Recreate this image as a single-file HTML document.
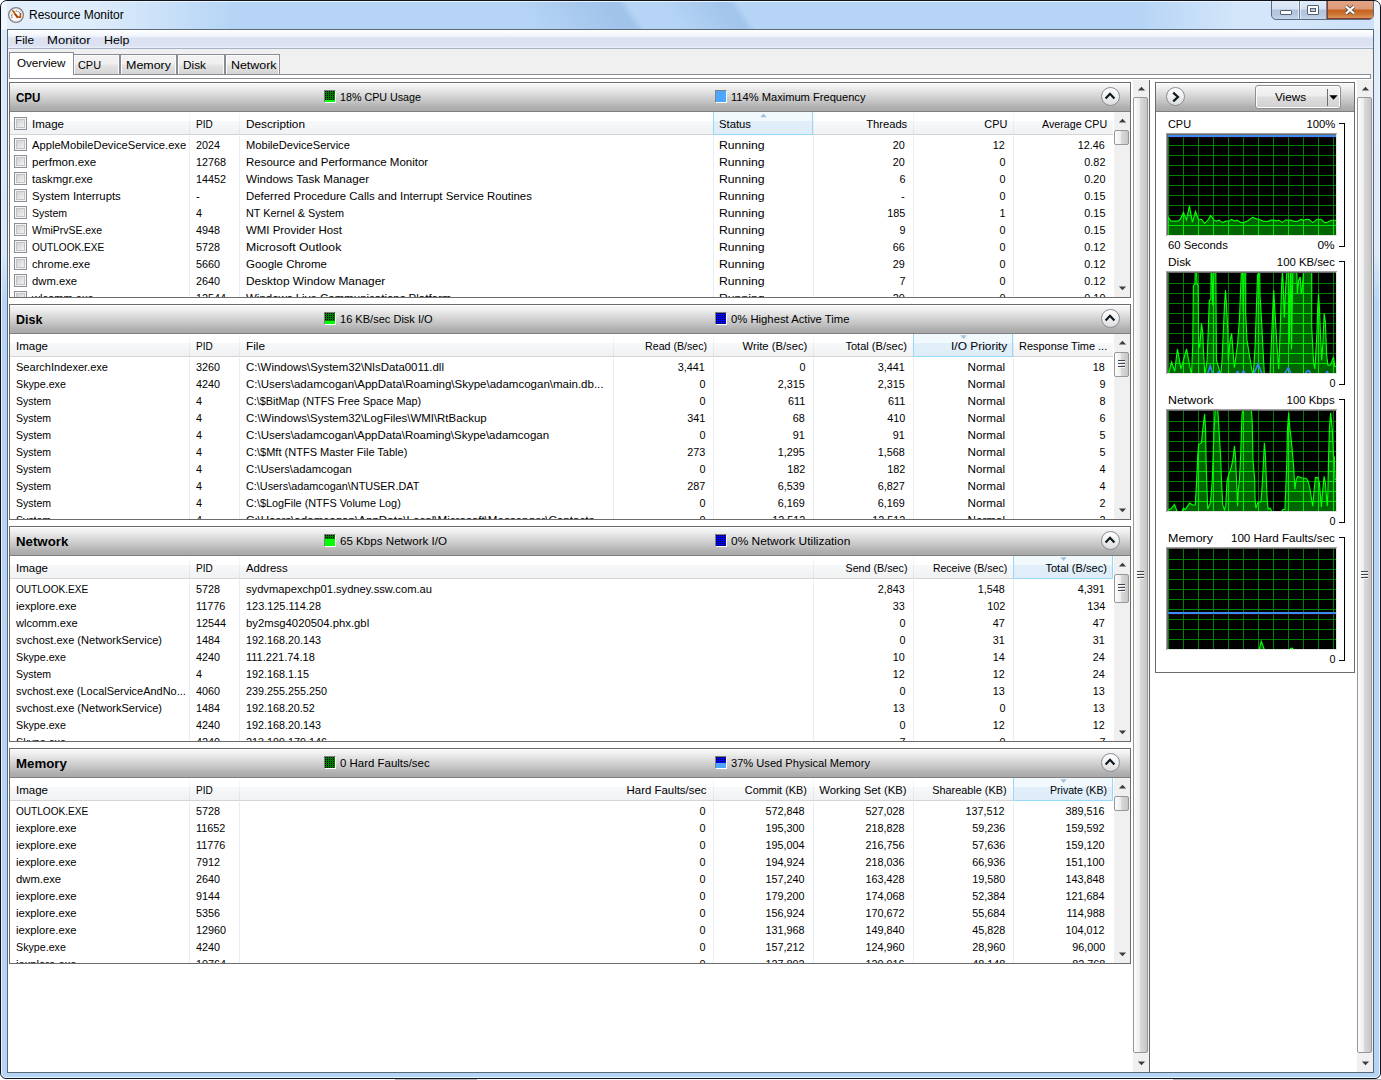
<!DOCTYPE html><html><head><meta charset="utf-8"><title>Resource Monitor</title><style>
*{box-sizing:border-box}
html,body{margin:0;padding:0}
body{width:1381px;height:1080px;position:relative;overflow:hidden;background:#fff;font-family:"Liberation Sans",sans-serif;font-size:12px;color:#000}
div{position:absolute}
.tx{white-space:nowrap;font-size:11.5px}
.tx span{display:inline-block;white-space:nowrap}
#win{left:0;top:0;width:1381px;height:1079px;border:1px solid #10131c;border-radius:7px 7px 6px 6px;overflow:hidden;
 background:#b9d7f7}
#glass{left:0;top:0;width:1379px;height:1077px;border:1px solid #eaf4fd;border-radius:6px 6px 5px 5px;background:#b6d5f6}
#lstrip{left:1px;top:1px;width:5px;height:330px;background:linear-gradient(rgba(255,255,255,.5) 0,rgba(255,255,255,.45) 250px,rgba(255,255,255,0) 300px)}
#rstrip{left:1373px;top:1px;width:5px;height:330px;background:linear-gradient(rgba(255,255,255,.6) 0,rgba(255,255,255,.5) 250px,rgba(255,255,255,0) 300px)}
#stripes{left:1px;top:1px;width:1377px;height:28px;background:linear-gradient(90deg,rgba(255,255,255,.62) 0,rgba(255,255,255,.55) 90px,rgba(255,255,255,0) 230px),linear-gradient(90deg,rgba(255,255,255,0) 1140px,rgba(255,255,255,.4) 1235px,rgba(255,255,255,.42) 1285px,rgba(255,255,255,.3) 1377px),linear-gradient(56deg,rgba(140,178,222,0) 440px,rgba(140,178,222,.5) 515px,rgba(140,178,222,.5) 526px,rgba(140,178,222,0) 534px,rgba(140,178,222,0) 560px,rgba(140,178,222,.45) 610px,rgba(140,178,222,.45) 618px,rgba(140,178,222,0) 626px)}
#client{left:6px;top:28px;width:1367px;height:1044px;border:1px solid #5a6878;background:#fff;overflow:hidden}
/* inside client coordinates are offset by (8,30) */
#c{left:-8px;top:-30px;width:1381px;height:1080px}
#menubar{left:8px;top:30px;width:1365px;height:19px;border-bottom:1px solid #a7b3c4;
 background:linear-gradient(#ffffff 0,#f3f6fc 5px,#e9eef9 7px,#dde2f2 8px,#dde2f2 16px,#e6ecf8 17px,#e9eff9 18px)}
#tabbg{left:8px;top:49px;width:1365px;height:30px;background:#f0f0f0}
.tab{top:54px;height:20px;border:1px solid #898c95;border-bottom:none;background:linear-gradient(#f2f2f2 0,#f0f0f0 9px,#e4e4e4 10px,#d4d4d4 19px);box-shadow:inset 1px 1px 0 #fbfbfb,inset -1px 0 0 #fbfbfb}
#tabpane{left:9px;top:74px;width:1362px;height:5px;border:1px solid #898c95;background:#fff}
#tab0{left:9px;top:52px;width:65px;height:23px;border:1px solid #898c95;border-bottom:none;background:#fff}
.sec{left:9px;width:1122px;height:216px;border:1px solid #6c6c6c;background:#fff;overflow:hidden}
.shead{left:0;top:0;width:1120px;height:29px;border-bottom:1px solid #7f7f7f;
 background:linear-gradient(#ffffff 0,#ffffff 1px,#f6f7f9 1px,#eeeeee 5px,#e1e1e1 9px,#d2d2d2 14px,#c2c2c2 19px,#b0b0b0 24px,#a8a8a8 28px)}
.stitle{font-weight:bold;font-size:13px}
.chead{left:0;top:29px;width:1103px;height:23px;border-bottom:1px solid #d5d5d5;background:linear-gradient(#fff 0,#fff 9px,#f7f8fa 9px,#f1f2f4 22px)}
.hsep{top:29px;width:1px;height:22px;background:linear-gradient(#fafafa,#dfe2e7)}
.bsep{top:53px;width:1px;height:170px;background:#e9eef6}
.sorted{top:29px;height:23px;border:1px solid #96d9f9;border-top:none;background:linear-gradient(#f2f9fc 0,#f2f9fc 9px,#e1effa 9px,#deedf9 22px)}
.cb{width:13px;height:13px;border:1px solid #8a8f99;background:linear-gradient(135deg,#cfcfcf 15%,#f3f3f3 85%);box-shadow:inset 0 0 0 1px #f4f4f4,inset 0 0 0 2px #c2c3c3}
.ico{width:12px;height:13px;border:1px solid #808080;border-right-color:#fff;border-bottom-color:#fff;overflow:hidden}
.ico div{left:0;width:10px}
.dg{background:linear-gradient(90deg,rgba(0,0,0,0) 50%,#008000 50%) 0 0/2px 2px,linear-gradient(#000 50%,#008000 50%) 0 0/2px 2px}
.db{background:linear-gradient(90deg,rgba(0,0,0,0) 50%,#0000ff 50%) 0 0/2px 2px,linear-gradient(#000 50%,#0000ff 50%) 0 0/2px 2px}
.circ{width:19px;height:19px;border-radius:50%;border:1px solid #8a8c98;background:linear-gradient(#ffffff,#f0f0f0 50%,#dcdcdc)}
.sbtrack{background:#f0f0f0}
.thumb{border:1px solid #979797;border-radius:2px;background:linear-gradient(90deg,#fdfdfe 0,#ececec 46%,#dadada 47%,#c6c6c6 100%)}
.grip{width:8px;height:8px}
.grip i{position:absolute;left:0;width:7px;height:1px;background:#40454d;box-shadow:0 1px 0 #f8f8f8}
.vbtn{border:1px solid #8f8f8f;border-radius:3px;background:linear-gradient(#f6f6f6 0,#ededed 45%,#dedede 50%,#d0d0d0 100%);box-shadow:inset 0 0 0 1px #fcfcfc}
</style></head><body>
<div style="left:0;top:1079px;width:1381px;height:1px;background:#fff"></div>
<div style="left:395px;top:1079px;width:82px;height:1px;background:#b8b8b8"></div>
<div style="left:1173px;top:1079px;width:208px;height:1px;background:#b8b8b8"></div>
<div id="win"><div id="glass"></div><div id="lstrip"></div><div id="rstrip"></div><div id="stripes"></div>
<svg style="position:absolute;left:6px;top:5px" width="18" height="18" viewBox="0 0 18 18">
<circle cx="9" cy="9" r="7.3" fill="#fdfdfd" stroke="#838383" stroke-width="1.5"/>
<circle cx="9" cy="9" r="6.2" fill="none" stroke="#dedede" stroke-width="0.8"/>
<path d="M4.4 11.4 L5.6 11 M4.1 9.7 L5.3 9.6 M4.4 8 L5.5 8.2 M7.6 4.9 L7.9 5.9 M9.4 4.5 L9.4 5.5 M11.2 4.9 L10.9 5.8 M12.6 5.9 L12 6.7" stroke="#6e727a" stroke-width="1.1"/>
<path d="M5.3 4.3 L10.9 11.8" stroke="#c86410" stroke-width="1.8"/>
<path d="M8.0 7.9 L10.9 11.8" stroke="#a23e08" stroke-width="1.8"/>
<path d="M11.2 11.1 L13.4 11.1 L13.4 7" fill="none" stroke="#b8500a" stroke-width="1.6"/>
</svg>
<div class="tx " style="left:28px;top:5px;height:18px;line-height:18px;font-size:12px;color:#000;"><span style="transform:scaleX(1.0);transform-origin:left center">Resource Monitor</span></div>
<div style="left:1270px;top:-2px;width:103px;height:21px;border:1px solid #5d6b7c;border-radius:0 0 5px 5px;overflow:hidden;background:linear-gradient(#e3edf9 0,#d3e2f4 9px,#b3c4dc 10px,#b6c8e0 15px,#c3d6ec 19px)">
<div style="left:0;top:0;width:28px;height:19px;border-right:1px solid #6f7d8e;box-shadow:inset -1px 0 0 rgba(255,255,255,.6)"></div>
<div style="left:28px;top:0;width:27px;height:19px;border-right:1px solid #6f7d8e;box-shadow:inset 1px 0 0 rgba(255,255,255,.6)"></div>
<div style="left:55px;top:0;width:46px;height:19px;background:linear-gradient(#e2a688 0,#dd9a78 9px,#c4601c 10px,#cc7430 14px,#dc9c64 19px);box-shadow:inset 1px 0 0 #8a3a30,inset 0 -1px 0 #8a3a30"></div>
<div style="left:8px;top:10px;width:12px;height:5px;border:1px solid #55606e;background:#fff;border-radius:1px"></div>
<div style="left:35px;top:5px;width:12px;height:10px;border:1px solid #55606e;background:#fff;border-radius:1px"></div>
<div style="left:38px;top:8px;width:6px;height:4px;border:1px solid #55606e;background:#b9cde6"></div>
<svg style="position:absolute;left:72px;top:5px" width="12" height="10" viewBox="0 0 12 10"><path d="M2 1.5 L10 8.5 M10 1.5 L2 8.5" stroke="#5a5048" stroke-width="3.8"/><path d="M2 1.5 L10 8.5 M10 1.5 L2 8.5" stroke="#fff" stroke-width="2.2"/></svg>
</div>
<div id="client"><div id="c">
<div id="menubar"></div>
<div class="tx " style="left:15px;top:31px;height:18px;line-height:18px;"><span style="transform:scaleX(1.0249);transform-origin:left center">File</span></div>
<div class="tx " style="left:47px;top:31px;height:18px;line-height:18px;"><span style="transform:scaleX(1.1367);transform-origin:left center">Monitor</span></div>
<div class="tx " style="left:104px;top:31px;height:18px;line-height:18px;"><span style="transform:scaleX(1.0778);transform-origin:left center">Help</span></div>
<div id="tabbg"></div>
<div id="tabpane"></div>
<div class="tab" style="left:73px;width:47px"></div>
<div class="tx " style="left:78px;top:56px;height:18px;line-height:18px;"><span style="transform:scaleX(0.9471);transform-origin:left center">CPU</span></div>
<div class="tab" style="left:120px;width:57px"></div>
<div class="tx " style="left:126px;top:56px;height:18px;line-height:18px;"><span style="transform:scaleX(1.0834);transform-origin:left center">Memory</span></div>
<div class="tab" style="left:177px;width:48px"></div>
<div class="tx " style="left:183px;top:56px;height:18px;line-height:18px;"><span style="transform:scaleX(1.0285);transform-origin:left center">Disk</span></div>
<div class="tab" style="left:225px;width:55px"></div>
<div class="tx " style="left:231px;top:56px;height:18px;line-height:18px;"><span style="transform:scaleX(1.0786);transform-origin:left center">Network</span></div>
<div id="tab0"></div>
<div class="tx " style="left:17px;top:54px;height:18px;line-height:18px;"><span style="transform:scaleX(1.0118);transform-origin:left center">Overview</span></div>
<div class="sec" style="top:82px">
<div class="shead"></div>
<div class="tx stitle" style="left:6px;top:6px;height:18px;line-height:18px;"><span style="transform:scaleX(0.89);transform-origin:left center">CPU</span></div>
<div class="ico" style="left:314px;top:7px"><div style="top:0;height:11px;background:#00ff00"></div><div class="dg" style="top:0;height:9px"></div></div>
<div class="tx " style="left:330px;top:6px;height:17px;line-height:17px;"><span style="transform:scaleX(0.9316);transform-origin:left center">18% CPU Usage</span></div>
<div class="ico" style="left:705px;top:7px"><div style="top:0;height:11px;background:#4da6ff"></div></div>
<div class="tx " style="left:721px;top:6px;height:17px;line-height:17px;"><span style="transform:scaleX(0.9666);transform-origin:left center">114% Maximum Frequency</span></div>
<div class="circ" style="left:1091px;top:4px"></div>
<svg style="position:absolute;left:1094px;top:8px" width="12" height="9" viewBox="0 0 12 9"><path d="M1.6 7.6 L6 2.8 L10.4 7.6" fill="none" stroke="#0c1a20" stroke-width="2.2"/></svg>
<div class="chead"></div>
<div class="hsep" style="left:179px"></div><div class="bsep" style="left:179px"></div>
<div class="hsep" style="left:229px"></div><div class="bsep" style="left:229px"></div>
<div class="hsep" style="left:703px"></div><div class="bsep" style="left:703px"></div>
<div class="hsep" style="left:803px"></div><div class="bsep" style="left:803px"></div>
<div class="hsep" style="left:903px"></div><div class="bsep" style="left:903px"></div>
<div class="hsep" style="left:1003px"></div><div class="bsep" style="left:1003px"></div>
<div class="sorted" style="left:703px;width:100px"></div>
<svg style="position:absolute;left:750px;top:30px" width="7" height="5" viewBox="0 0 7 5"><path d="M0.3 4.2 L3.5 0.6 L6.7 4.2 Z" fill="#a3c1db"/></svg>
<div class="tx " style="left:22px;top:31px;height:20px;line-height:20px;"><span style="transform:scaleX(1.001);transform-origin:left center">Image</span></div>
<div class="tx " style="left:186px;top:31px;height:20px;line-height:20px;"><span style="transform:scaleX(0.871);transform-origin:left center">PID</span></div>
<div class="tx " style="left:236px;top:31px;height:20px;line-height:20px;"><span style="transform:scaleX(1.0254);transform-origin:left center">Description</span></div>
<div class="tx " style="left:709px;top:31px;height:20px;line-height:20px;"><span style="transform:scaleX(0.9813);transform-origin:left center">Status</span></div>
<div class="tx " style="right:223px;top:31px;height:20px;line-height:20px;text-align:right;"><span style="transform:scaleX(0.9716);transform-origin:right center">Threads</span></div>
<div class="tx " style="right:123px;top:31px;height:20px;line-height:20px;text-align:right;"><span style="transform:scaleX(0.9471);transform-origin:right center">CPU</span></div>
<div class="tx " style="right:23px;top:31px;height:20px;line-height:20px;text-align:right;"><span style="transform:scaleX(0.927);transform-origin:right center">Average CPU</span></div>
<div class="cb" style="left:4px;top:34px"></div>
<div class="cb" style="left:4px;top:55px"></div>
<div class="tx " style="left:22px;top:54px;height:17px;line-height:17px;"><span style="transform:scaleX(0.9725);transform-origin:left center">AppleMobileDeviceService.exe</span></div>
<div class="tx " style="left:186px;top:54px;height:17px;line-height:17px;"><span style="transform:scaleX(0.9391);transform-origin:left center">2024</span></div>
<div class="tx " style="left:236px;top:54px;height:17px;line-height:17px;"><span style="transform:scaleX(0.9674);transform-origin:left center">MobileDeviceService</span></div>
<div class="tx " style="left:709px;top:54px;height:17px;line-height:17px;"><span style="transform:scaleX(1.0618);transform-origin:left center">Running</span></div>
<div class="tx " style="right:225px;top:54px;height:17px;line-height:17px;text-align:right;"><span style="transform:scaleX(0.9391);transform-origin:right center">20</span></div>
<div class="tx " style="right:125px;top:54px;height:17px;line-height:17px;text-align:right;"><span style="transform:scaleX(0.9391);transform-origin:right center">12</span></div>
<div class="tx " style="right:25px;top:54px;height:17px;line-height:17px;text-align:right;"><span style="transform:scaleX(0.9391);transform-origin:right center">12.46</span></div>
<div class="cb" style="left:4px;top:72px"></div>
<div class="tx " style="left:22px;top:71px;height:17px;line-height:17px;"><span style="transform:scaleX(1.0056);transform-origin:left center">perfmon.exe</span></div>
<div class="tx " style="left:186px;top:71px;height:17px;line-height:17px;"><span style="transform:scaleX(0.9391);transform-origin:left center">12768</span></div>
<div class="tx " style="left:236px;top:71px;height:17px;line-height:17px;"><span style="transform:scaleX(0.9999);transform-origin:left center">Resource and Performance Monitor</span></div>
<div class="tx " style="left:709px;top:71px;height:17px;line-height:17px;"><span style="transform:scaleX(1.0618);transform-origin:left center">Running</span></div>
<div class="tx " style="right:225px;top:71px;height:17px;line-height:17px;text-align:right;"><span style="transform:scaleX(0.9391);transform-origin:right center">20</span></div>
<div class="tx " style="right:125px;top:71px;height:17px;line-height:17px;text-align:right;"><span style="transform:scaleX(0.9391);transform-origin:right center">0</span></div>
<div class="tx " style="right:25px;top:71px;height:17px;line-height:17px;text-align:right;"><span style="transform:scaleX(0.9391);transform-origin:right center">0.82</span></div>
<div class="cb" style="left:4px;top:89px"></div>
<div class="tx " style="left:22px;top:88px;height:17px;line-height:17px;"><span style="transform:scaleX(0.9821);transform-origin:left center">taskmgr.exe</span></div>
<div class="tx " style="left:186px;top:88px;height:17px;line-height:17px;"><span style="transform:scaleX(0.9391);transform-origin:left center">14452</span></div>
<div class="tx " style="left:236px;top:88px;height:17px;line-height:17px;"><span style="transform:scaleX(1.0099);transform-origin:left center">Windows Task Manager</span></div>
<div class="tx " style="left:709px;top:88px;height:17px;line-height:17px;"><span style="transform:scaleX(1.0618);transform-origin:left center">Running</span></div>
<div class="tx " style="right:225px;top:88px;height:17px;line-height:17px;text-align:right;"><span style="transform:scaleX(0.9391);transform-origin:right center">6</span></div>
<div class="tx " style="right:125px;top:88px;height:17px;line-height:17px;text-align:right;"><span style="transform:scaleX(0.9391);transform-origin:right center">0</span></div>
<div class="tx " style="right:25px;top:88px;height:17px;line-height:17px;text-align:right;"><span style="transform:scaleX(0.9391);transform-origin:right center">0.20</span></div>
<div class="cb" style="left:4px;top:106px"></div>
<div class="tx " style="left:22px;top:105px;height:17px;line-height:17px;"><span style="transform:scaleX(0.9852);transform-origin:left center">System Interrupts</span></div>
<div class="tx " style="left:186px;top:105px;height:17px;line-height:17px;"><span style="transform:scaleX(0.9861);transform-origin:left center">-</span></div>
<div class="tx " style="left:236px;top:105px;height:17px;line-height:17px;"><span style="transform:scaleX(0.9918);transform-origin:left center">Deferred Procedure Calls and Interrupt Service Routines</span></div>
<div class="tx " style="left:709px;top:105px;height:17px;line-height:17px;"><span style="transform:scaleX(1.0618);transform-origin:left center">Running</span></div>
<div class="tx " style="right:225px;top:105px;height:17px;line-height:17px;text-align:right;"><span style="transform:scaleX(0.9861);transform-origin:right center">-</span></div>
<div class="tx " style="right:125px;top:105px;height:17px;line-height:17px;text-align:right;"><span style="transform:scaleX(0.9391);transform-origin:right center">0</span></div>
<div class="tx " style="right:25px;top:105px;height:17px;line-height:17px;text-align:right;"><span style="transform:scaleX(0.9391);transform-origin:right center">0.15</span></div>
<div class="cb" style="left:4px;top:123px"></div>
<div class="tx " style="left:22px;top:122px;height:17px;line-height:17px;"><span style="transform:scaleX(0.9154);transform-origin:left center">System</span></div>
<div class="tx " style="left:186px;top:122px;height:17px;line-height:17px;"><span style="transform:scaleX(0.9391);transform-origin:left center">4</span></div>
<div class="tx " style="left:236px;top:122px;height:17px;line-height:17px;"><span style="transform:scaleX(0.9434);transform-origin:left center">NT Kernel &amp; System</span></div>
<div class="tx " style="left:709px;top:122px;height:17px;line-height:17px;"><span style="transform:scaleX(1.0618);transform-origin:left center">Running</span></div>
<div class="tx " style="right:225px;top:122px;height:17px;line-height:17px;text-align:right;"><span style="transform:scaleX(0.9391);transform-origin:right center">185</span></div>
<div class="tx " style="right:125px;top:122px;height:17px;line-height:17px;text-align:right;"><span style="transform:scaleX(0.9391);transform-origin:right center">1</span></div>
<div class="tx " style="right:25px;top:122px;height:17px;line-height:17px;text-align:right;"><span style="transform:scaleX(0.9391);transform-origin:right center">0.15</span></div>
<div class="cb" style="left:4px;top:140px"></div>
<div class="tx " style="left:22px;top:139px;height:17px;line-height:17px;"><span style="transform:scaleX(0.9066);transform-origin:left center">WmiPrvSE.exe</span></div>
<div class="tx " style="left:186px;top:139px;height:17px;line-height:17px;"><span style="transform:scaleX(0.9391);transform-origin:left center">4948</span></div>
<div class="tx " style="left:236px;top:139px;height:17px;line-height:17px;"><span style="transform:scaleX(0.9947);transform-origin:left center">WMI Provider Host</span></div>
<div class="tx " style="left:709px;top:139px;height:17px;line-height:17px;"><span style="transform:scaleX(1.0618);transform-origin:left center">Running</span></div>
<div class="tx " style="right:225px;top:139px;height:17px;line-height:17px;text-align:right;"><span style="transform:scaleX(0.9391);transform-origin:right center">9</span></div>
<div class="tx " style="right:125px;top:139px;height:17px;line-height:17px;text-align:right;"><span style="transform:scaleX(0.9391);transform-origin:right center">0</span></div>
<div class="tx " style="right:25px;top:139px;height:17px;line-height:17px;text-align:right;"><span style="transform:scaleX(0.9391);transform-origin:right center">0.15</span></div>
<div class="cb" style="left:4px;top:157px"></div>
<div class="tx " style="left:22px;top:156px;height:17px;line-height:17px;"><span style="transform:scaleX(0.8757);transform-origin:left center">OUTLOOK.EXE</span></div>
<div class="tx " style="left:186px;top:156px;height:17px;line-height:17px;"><span style="transform:scaleX(0.9391);transform-origin:left center">5728</span></div>
<div class="tx " style="left:236px;top:156px;height:17px;line-height:17px;"><span style="transform:scaleX(1.0649);transform-origin:left center">Microsoft Outlook</span></div>
<div class="tx " style="left:709px;top:156px;height:17px;line-height:17px;"><span style="transform:scaleX(1.0618);transform-origin:left center">Running</span></div>
<div class="tx " style="right:225px;top:156px;height:17px;line-height:17px;text-align:right;"><span style="transform:scaleX(0.9391);transform-origin:right center">66</span></div>
<div class="tx " style="right:125px;top:156px;height:17px;line-height:17px;text-align:right;"><span style="transform:scaleX(0.9391);transform-origin:right center">0</span></div>
<div class="tx " style="right:25px;top:156px;height:17px;line-height:17px;text-align:right;"><span style="transform:scaleX(0.9391);transform-origin:right center">0.12</span></div>
<div class="cb" style="left:4px;top:174px"></div>
<div class="tx " style="left:22px;top:173px;height:17px;line-height:17px;"><span style="transform:scaleX(0.9668);transform-origin:left center">chrome.exe</span></div>
<div class="tx " style="left:186px;top:173px;height:17px;line-height:17px;"><span style="transform:scaleX(0.9391);transform-origin:left center">5660</span></div>
<div class="tx " style="left:236px;top:173px;height:17px;line-height:17px;"><span style="transform:scaleX(0.9963);transform-origin:left center">Google Chrome</span></div>
<div class="tx " style="left:709px;top:173px;height:17px;line-height:17px;"><span style="transform:scaleX(1.0618);transform-origin:left center">Running</span></div>
<div class="tx " style="right:225px;top:173px;height:17px;line-height:17px;text-align:right;"><span style="transform:scaleX(0.9391);transform-origin:right center">29</span></div>
<div class="tx " style="right:125px;top:173px;height:17px;line-height:17px;text-align:right;"><span style="transform:scaleX(0.9391);transform-origin:right center">0</span></div>
<div class="tx " style="right:25px;top:173px;height:17px;line-height:17px;text-align:right;"><span style="transform:scaleX(0.9391);transform-origin:right center">0.12</span></div>
<div class="cb" style="left:4px;top:191px"></div>
<div class="tx " style="left:22px;top:190px;height:17px;line-height:17px;"><span style="transform:scaleX(0.9799);transform-origin:left center">dwm.exe</span></div>
<div class="tx " style="left:186px;top:190px;height:17px;line-height:17px;"><span style="transform:scaleX(0.9391);transform-origin:left center">2640</span></div>
<div class="tx " style="left:236px;top:190px;height:17px;line-height:17px;"><span style="transform:scaleX(1.0326);transform-origin:left center">Desktop Window Manager</span></div>
<div class="tx " style="left:709px;top:190px;height:17px;line-height:17px;"><span style="transform:scaleX(1.0618);transform-origin:left center">Running</span></div>
<div class="tx " style="right:225px;top:190px;height:17px;line-height:17px;text-align:right;"><span style="transform:scaleX(0.9391);transform-origin:right center">7</span></div>
<div class="tx " style="right:125px;top:190px;height:17px;line-height:17px;text-align:right;"><span style="transform:scaleX(0.9391);transform-origin:right center">0</span></div>
<div class="tx " style="right:25px;top:190px;height:17px;line-height:17px;text-align:right;"><span style="transform:scaleX(0.9391);transform-origin:right center">0.12</span></div>
<div class="cb" style="left:4px;top:208px"></div>
<div class="tx " style="left:22px;top:207px;height:17px;line-height:17px;"><span style="transform:scaleX(0.9654);transform-origin:left center">wlcomm.exe</span></div>
<div class="tx " style="left:186px;top:207px;height:17px;line-height:17px;"><span style="transform:scaleX(0.9391);transform-origin:left center">12544</span></div>
<div class="tx " style="left:236px;top:207px;height:17px;line-height:17px;"><span style="transform:scaleX(0.9978);transform-origin:left center">Windows Live Communications Platform</span></div>
<div class="tx " style="left:709px;top:207px;height:17px;line-height:17px;"><span style="transform:scaleX(1.0618);transform-origin:left center">Running</span></div>
<div class="tx " style="right:225px;top:207px;height:17px;line-height:17px;text-align:right;"><span style="transform:scaleX(0.9391);transform-origin:right center">20</span></div>
<div class="tx " style="right:125px;top:207px;height:17px;line-height:17px;text-align:right;"><span style="transform:scaleX(0.9391);transform-origin:right center">0</span></div>
<div class="tx " style="right:25px;top:207px;height:17px;line-height:17px;text-align:right;"><span style="transform:scaleX(0.9391);transform-origin:right center">0.10</span></div>
<div class="sbtrack" style="left:1104px;top:29px;width:16px;height:186px"></div>
<svg style="position:absolute;left:1108px;top:35px" width="9" height="5" viewBox="0 0 9 5"><path d="M0.9 4.6 L4.5 0.7 L8.1 4.6 Z" fill="#3a3f47"/></svg>
<svg style="position:absolute;left:1108px;top:203px" width="9" height="5" viewBox="0 0 9 5"><path d="M0.9 0.4 L4.5 4.3 L8.1 0.4 Z" fill="#3a3f47"/></svg>
<div class="thumb" style="left:1104px;top:47px;width:15px;height:15px"></div>
</div>
<div class="sec" style="top:304px">
<div class="shead"></div>
<div class="tx stitle" style="left:6px;top:6px;height:18px;line-height:18px;"><span style="transform:scaleX(0.96);transform-origin:left center">Disk</span></div>
<div class="ico" style="left:314px;top:7px"><div style="top:0;height:11px;background:#00ff00"></div><div class="dg" style="top:0;height:8px"></div></div>
<div class="tx " style="left:330px;top:6px;height:17px;line-height:17px;"><span style="transform:scaleX(0.9604);transform-origin:left center">16 KB/sec Disk I/O</span></div>
<div class="ico" style="left:705px;top:7px"><div style="top:0;height:11px;background:#4da6ff"></div><div class="db" style="top:0;height:11px"></div></div>
<div class="tx " style="left:721px;top:6px;height:17px;line-height:17px;"><span style="transform:scaleX(0.9807);transform-origin:left center">0% Highest Active Time</span></div>
<div class="circ" style="left:1091px;top:4px"></div>
<svg style="position:absolute;left:1094px;top:8px" width="12" height="9" viewBox="0 0 12 9"><path d="M1.6 7.6 L6 2.8 L10.4 7.6" fill="none" stroke="#0c1a20" stroke-width="2.2"/></svg>
<div class="chead"></div>
<div class="hsep" style="left:179px"></div><div class="bsep" style="left:179px"></div>
<div class="hsep" style="left:229px"></div><div class="bsep" style="left:229px"></div>
<div class="hsep" style="left:603px"></div><div class="bsep" style="left:603px"></div>
<div class="hsep" style="left:703px"></div><div class="bsep" style="left:703px"></div>
<div class="hsep" style="left:803px"></div><div class="bsep" style="left:803px"></div>
<div class="hsep" style="left:903px"></div><div class="bsep" style="left:903px"></div>
<div class="hsep" style="left:1003px"></div><div class="bsep" style="left:1003px"></div>
<div class="sorted" style="left:903px;width:100px"></div>
<svg style="position:absolute;left:950px;top:30px" width="7" height="5" viewBox="0 0 7 5"><path d="M0.3 0.3 L3.5 3.9 L6.7 0.3 Z" fill="#a3c1db"/></svg>
<div class="tx " style="left:6px;top:31px;height:20px;line-height:20px;"><span style="transform:scaleX(1.001);transform-origin:left center">Image</span></div>
<div class="tx " style="left:186px;top:31px;height:20px;line-height:20px;"><span style="transform:scaleX(0.871);transform-origin:left center">PID</span></div>
<div class="tx " style="left:236px;top:31px;height:20px;line-height:20px;"><span style="transform:scaleX(1.0249);transform-origin:left center">File</span></div>
<div class="tx " style="right:423px;top:31px;height:20px;line-height:20px;text-align:right;"><span style="transform:scaleX(0.9237);transform-origin:right center">Read (B/sec)</span></div>
<div class="tx " style="right:323px;top:31px;height:20px;line-height:20px;text-align:right;"><span style="transform:scaleX(0.9766);transform-origin:right center">Write (B/sec)</span></div>
<div class="tx " style="right:223px;top:31px;height:20px;line-height:20px;text-align:right;"><span style="transform:scaleX(0.9621);transform-origin:right center">Total (B/sec)</span></div>
<div class="tx " style="right:123px;top:31px;height:20px;line-height:20px;text-align:right;"><span style="transform:scaleX(1.0363);transform-origin:right center">I/O Priority</span></div>
<div class="tx " style="left:1009px;top:31px;height:20px;line-height:20px;"><span style="transform:scaleX(0.9514);transform-origin:left center">Response Time ...</span></div>
<div class="tx " style="left:6px;top:54px;height:17px;line-height:17px;"><span style="transform:scaleX(0.9591);transform-origin:left center">SearchIndexer.exe</span></div>
<div class="tx " style="left:186px;top:54px;height:17px;line-height:17px;"><span style="transform:scaleX(0.9391);transform-origin:left center">3260</span></div>
<div class="tx " style="left:236px;top:54px;height:17px;line-height:17px;"><span style="transform:scaleX(0.9937);transform-origin:left center">C:\Windows\System32\NlsData0011.dll</span></div>
<div class="tx " style="right:425px;top:54px;height:17px;line-height:17px;text-align:right;"><span style="transform:scaleX(0.9391);transform-origin:right center">3,441</span></div>
<div class="tx " style="right:325px;top:54px;height:17px;line-height:17px;text-align:right;"><span style="transform:scaleX(0.9391);transform-origin:right center">0</span></div>
<div class="tx " style="right:225px;top:54px;height:17px;line-height:17px;text-align:right;"><span style="transform:scaleX(0.9391);transform-origin:right center">3,441</span></div>
<div class="tx " style="right:125px;top:54px;height:17px;line-height:17px;text-align:right;"><span style="transform:scaleX(1.0144);transform-origin:right center">Normal</span></div>
<div class="tx " style="right:25px;top:54px;height:17px;line-height:17px;text-align:right;"><span style="transform:scaleX(0.9391);transform-origin:right center">18</span></div>
<div class="tx " style="left:6px;top:71px;height:17px;line-height:17px;"><span style="transform:scaleX(0.9291);transform-origin:left center">Skype.exe</span></div>
<div class="tx " style="left:186px;top:71px;height:17px;line-height:17px;"><span style="transform:scaleX(0.9391);transform-origin:left center">4240</span></div>
<div class="tx " style="left:236px;top:71px;height:17px;line-height:17px;"><span style="transform:scaleX(1.0005);transform-origin:left center">C:\Users\adamcogan\AppData\Roaming\Skype\adamcogan\main.db...</span></div>
<div class="tx " style="right:425px;top:71px;height:17px;line-height:17px;text-align:right;"><span style="transform:scaleX(0.9391);transform-origin:right center">0</span></div>
<div class="tx " style="right:325px;top:71px;height:17px;line-height:17px;text-align:right;"><span style="transform:scaleX(0.9391);transform-origin:right center">2,315</span></div>
<div class="tx " style="right:225px;top:71px;height:17px;line-height:17px;text-align:right;"><span style="transform:scaleX(0.9391);transform-origin:right center">2,315</span></div>
<div class="tx " style="right:125px;top:71px;height:17px;line-height:17px;text-align:right;"><span style="transform:scaleX(1.0144);transform-origin:right center">Normal</span></div>
<div class="tx " style="right:25px;top:71px;height:17px;line-height:17px;text-align:right;"><span style="transform:scaleX(0.9391);transform-origin:right center">9</span></div>
<div class="tx " style="left:6px;top:88px;height:17px;line-height:17px;"><span style="transform:scaleX(0.9154);transform-origin:left center">System</span></div>
<div class="tx " style="left:186px;top:88px;height:17px;line-height:17px;"><span style="transform:scaleX(0.9391);transform-origin:left center">4</span></div>
<div class="tx " style="left:236px;top:88px;height:17px;line-height:17px;"><span style="transform:scaleX(0.9419);transform-origin:left center">C:\$BitMap (NTFS Free Space Map)</span></div>
<div class="tx " style="right:425px;top:88px;height:17px;line-height:17px;text-align:right;"><span style="transform:scaleX(0.9391);transform-origin:right center">0</span></div>
<div class="tx " style="right:325px;top:88px;height:17px;line-height:17px;text-align:right;"><span style="transform:scaleX(0.9391);transform-origin:right center">611</span></div>
<div class="tx " style="right:225px;top:88px;height:17px;line-height:17px;text-align:right;"><span style="transform:scaleX(0.9391);transform-origin:right center">611</span></div>
<div class="tx " style="right:125px;top:88px;height:17px;line-height:17px;text-align:right;"><span style="transform:scaleX(1.0144);transform-origin:right center">Normal</span></div>
<div class="tx " style="right:25px;top:88px;height:17px;line-height:17px;text-align:right;"><span style="transform:scaleX(0.9391);transform-origin:right center">8</span></div>
<div class="tx " style="left:6px;top:105px;height:17px;line-height:17px;"><span style="transform:scaleX(0.9154);transform-origin:left center">System</span></div>
<div class="tx " style="left:186px;top:105px;height:17px;line-height:17px;"><span style="transform:scaleX(0.9391);transform-origin:left center">4</span></div>
<div class="tx " style="left:236px;top:105px;height:17px;line-height:17px;"><span style="transform:scaleX(0.9935);transform-origin:left center">C:\Windows\System32\LogFiles\WMI\RtBackup</span></div>
<div class="tx " style="right:425px;top:105px;height:17px;line-height:17px;text-align:right;"><span style="transform:scaleX(0.9391);transform-origin:right center">341</span></div>
<div class="tx " style="right:325px;top:105px;height:17px;line-height:17px;text-align:right;"><span style="transform:scaleX(0.9391);transform-origin:right center">68</span></div>
<div class="tx " style="right:225px;top:105px;height:17px;line-height:17px;text-align:right;"><span style="transform:scaleX(0.9391);transform-origin:right center">410</span></div>
<div class="tx " style="right:125px;top:105px;height:17px;line-height:17px;text-align:right;"><span style="transform:scaleX(1.0144);transform-origin:right center">Normal</span></div>
<div class="tx " style="right:25px;top:105px;height:17px;line-height:17px;text-align:right;"><span style="transform:scaleX(0.9391);transform-origin:right center">6</span></div>
<div class="tx " style="left:6px;top:122px;height:17px;line-height:17px;"><span style="transform:scaleX(0.9154);transform-origin:left center">System</span></div>
<div class="tx " style="left:186px;top:122px;height:17px;line-height:17px;"><span style="transform:scaleX(0.9391);transform-origin:left center">4</span></div>
<div class="tx " style="left:236px;top:122px;height:17px;line-height:17px;"><span style="transform:scaleX(0.9983);transform-origin:left center">C:\Users\adamcogan\AppData\Roaming\Skype\adamcogan</span></div>
<div class="tx " style="right:425px;top:122px;height:17px;line-height:17px;text-align:right;"><span style="transform:scaleX(0.9391);transform-origin:right center">0</span></div>
<div class="tx " style="right:325px;top:122px;height:17px;line-height:17px;text-align:right;"><span style="transform:scaleX(0.9391);transform-origin:right center">91</span></div>
<div class="tx " style="right:225px;top:122px;height:17px;line-height:17px;text-align:right;"><span style="transform:scaleX(0.9391);transform-origin:right center">91</span></div>
<div class="tx " style="right:125px;top:122px;height:17px;line-height:17px;text-align:right;"><span style="transform:scaleX(1.0144);transform-origin:right center">Normal</span></div>
<div class="tx " style="right:25px;top:122px;height:17px;line-height:17px;text-align:right;"><span style="transform:scaleX(0.9391);transform-origin:right center">5</span></div>
<div class="tx " style="left:6px;top:139px;height:17px;line-height:17px;"><span style="transform:scaleX(0.9154);transform-origin:left center">System</span></div>
<div class="tx " style="left:186px;top:139px;height:17px;line-height:17px;"><span style="transform:scaleX(0.9391);transform-origin:left center">4</span></div>
<div class="tx " style="left:236px;top:139px;height:17px;line-height:17px;"><span style="transform:scaleX(0.9577);transform-origin:left center">C:\$Mft (NTFS Master File Table)</span></div>
<div class="tx " style="right:425px;top:139px;height:17px;line-height:17px;text-align:right;"><span style="transform:scaleX(0.9391);transform-origin:right center">273</span></div>
<div class="tx " style="right:325px;top:139px;height:17px;line-height:17px;text-align:right;"><span style="transform:scaleX(0.9391);transform-origin:right center">1,295</span></div>
<div class="tx " style="right:225px;top:139px;height:17px;line-height:17px;text-align:right;"><span style="transform:scaleX(0.9391);transform-origin:right center">1,568</span></div>
<div class="tx " style="right:125px;top:139px;height:17px;line-height:17px;text-align:right;"><span style="transform:scaleX(1.0144);transform-origin:right center">Normal</span></div>
<div class="tx " style="right:25px;top:139px;height:17px;line-height:17px;text-align:right;"><span style="transform:scaleX(0.9391);transform-origin:right center">5</span></div>
<div class="tx " style="left:6px;top:156px;height:17px;line-height:17px;"><span style="transform:scaleX(0.9154);transform-origin:left center">System</span></div>
<div class="tx " style="left:186px;top:156px;height:17px;line-height:17px;"><span style="transform:scaleX(0.9391);transform-origin:left center">4</span></div>
<div class="tx " style="left:236px;top:156px;height:17px;line-height:17px;"><span style="transform:scaleX(0.9792);transform-origin:left center">C:\Users\adamcogan</span></div>
<div class="tx " style="right:425px;top:156px;height:17px;line-height:17px;text-align:right;"><span style="transform:scaleX(0.9391);transform-origin:right center">0</span></div>
<div class="tx " style="right:325px;top:156px;height:17px;line-height:17px;text-align:right;"><span style="transform:scaleX(0.9391);transform-origin:right center">182</span></div>
<div class="tx " style="right:225px;top:156px;height:17px;line-height:17px;text-align:right;"><span style="transform:scaleX(0.9391);transform-origin:right center">182</span></div>
<div class="tx " style="right:125px;top:156px;height:17px;line-height:17px;text-align:right;"><span style="transform:scaleX(1.0144);transform-origin:right center">Normal</span></div>
<div class="tx " style="right:25px;top:156px;height:17px;line-height:17px;text-align:right;"><span style="transform:scaleX(0.9391);transform-origin:right center">4</span></div>
<div class="tx " style="left:6px;top:173px;height:17px;line-height:17px;"><span style="transform:scaleX(0.9154);transform-origin:left center">System</span></div>
<div class="tx " style="left:186px;top:173px;height:17px;line-height:17px;"><span style="transform:scaleX(0.9391);transform-origin:left center">4</span></div>
<div class="tx " style="left:236px;top:173px;height:17px;line-height:17px;"><span style="transform:scaleX(0.9425);transform-origin:left center">C:\Users\adamcogan\NTUSER.DAT</span></div>
<div class="tx " style="right:425px;top:173px;height:17px;line-height:17px;text-align:right;"><span style="transform:scaleX(0.9391);transform-origin:right center">287</span></div>
<div class="tx " style="right:325px;top:173px;height:17px;line-height:17px;text-align:right;"><span style="transform:scaleX(0.9391);transform-origin:right center">6,539</span></div>
<div class="tx " style="right:225px;top:173px;height:17px;line-height:17px;text-align:right;"><span style="transform:scaleX(0.9391);transform-origin:right center">6,827</span></div>
<div class="tx " style="right:125px;top:173px;height:17px;line-height:17px;text-align:right;"><span style="transform:scaleX(1.0144);transform-origin:right center">Normal</span></div>
<div class="tx " style="right:25px;top:173px;height:17px;line-height:17px;text-align:right;"><span style="transform:scaleX(0.9391);transform-origin:right center">4</span></div>
<div class="tx " style="left:6px;top:190px;height:17px;line-height:17px;"><span style="transform:scaleX(0.9154);transform-origin:left center">System</span></div>
<div class="tx " style="left:186px;top:190px;height:17px;line-height:17px;"><span style="transform:scaleX(0.9391);transform-origin:left center">4</span></div>
<div class="tx " style="left:236px;top:190px;height:17px;line-height:17px;"><span style="transform:scaleX(0.9458);transform-origin:left center">C:\$LogFile (NTFS Volume Log)</span></div>
<div class="tx " style="right:425px;top:190px;height:17px;line-height:17px;text-align:right;"><span style="transform:scaleX(0.9391);transform-origin:right center">0</span></div>
<div class="tx " style="right:325px;top:190px;height:17px;line-height:17px;text-align:right;"><span style="transform:scaleX(0.9391);transform-origin:right center">6,169</span></div>
<div class="tx " style="right:225px;top:190px;height:17px;line-height:17px;text-align:right;"><span style="transform:scaleX(0.9391);transform-origin:right center">6,169</span></div>
<div class="tx " style="right:125px;top:190px;height:17px;line-height:17px;text-align:right;"><span style="transform:scaleX(1.0144);transform-origin:right center">Normal</span></div>
<div class="tx " style="right:25px;top:190px;height:17px;line-height:17px;text-align:right;"><span style="transform:scaleX(0.9391);transform-origin:right center">2</span></div>
<div class="tx " style="left:6px;top:207px;height:17px;line-height:17px;"><span style="transform:scaleX(0.9154);transform-origin:left center">System</span></div>
<div class="tx " style="left:186px;top:207px;height:17px;line-height:17px;"><span style="transform:scaleX(0.9391);transform-origin:left center">4</span></div>
<div class="tx " style="left:236px;top:207px;height:17px;line-height:17px;"><span style="transform:scaleX(1.0089);transform-origin:left center">C:\Users\adamcogan\AppData\Local\Microsoft\Messenger\Contacts...</span></div>
<div class="tx " style="right:425px;top:207px;height:17px;line-height:17px;text-align:right;"><span style="transform:scaleX(0.9391);transform-origin:right center">0</span></div>
<div class="tx " style="right:325px;top:207px;height:17px;line-height:17px;text-align:right;"><span style="transform:scaleX(0.9391);transform-origin:right center">12,512</span></div>
<div class="tx " style="right:225px;top:207px;height:17px;line-height:17px;text-align:right;"><span style="transform:scaleX(0.9391);transform-origin:right center">12,512</span></div>
<div class="tx " style="right:125px;top:207px;height:17px;line-height:17px;text-align:right;"><span style="transform:scaleX(1.0144);transform-origin:right center">Normal</span></div>
<div class="tx " style="right:25px;top:207px;height:17px;line-height:17px;text-align:right;"><span style="transform:scaleX(0.9391);transform-origin:right center">2</span></div>
<div class="sbtrack" style="left:1104px;top:29px;width:16px;height:186px"></div>
<svg style="position:absolute;left:1108px;top:35px" width="9" height="5" viewBox="0 0 9 5"><path d="M0.9 4.6 L4.5 0.7 L8.1 4.6 Z" fill="#3a3f47"/></svg>
<svg style="position:absolute;left:1108px;top:203px" width="9" height="5" viewBox="0 0 9 5"><path d="M0.9 0.4 L4.5 4.3 L8.1 0.4 Z" fill="#3a3f47"/></svg>
<div class="thumb" style="left:1104px;top:47px;width:15px;height:25px"></div>
<div class="grip" style="left:1108px;top:55px"><i style="top:0"></i><i style="top:3px"></i><i style="top:6px"></i></div>
</div>
<div class="sec" style="top:526px">
<div class="shead"></div>
<div class="tx stitle" style="left:6px;top:6px;height:18px;line-height:18px;"><span style="transform:scaleX(1.02);transform-origin:left center">Network</span></div>
<div class="ico" style="left:314px;top:7px"><div style="top:0;height:11px;background:#00ff00"></div><div class="dg" style="top:0;height:4px"></div></div>
<div class="tx " style="left:330px;top:6px;height:17px;line-height:17px;"><span style="transform:scaleX(1.0082);transform-origin:left center">65 Kbps Network I/O</span></div>
<div class="ico" style="left:705px;top:7px"><div style="top:0;height:11px;background:#4da6ff"></div><div class="db" style="top:0;height:11px"></div></div>
<div class="tx " style="left:721px;top:6px;height:17px;line-height:17px;"><span style="transform:scaleX(1.0367);transform-origin:left center">0% Network Utilization</span></div>
<div class="circ" style="left:1091px;top:4px"></div>
<svg style="position:absolute;left:1094px;top:8px" width="12" height="9" viewBox="0 0 12 9"><path d="M1.6 7.6 L6 2.8 L10.4 7.6" fill="none" stroke="#0c1a20" stroke-width="2.2"/></svg>
<div class="chead"></div>
<div class="hsep" style="left:179px"></div><div class="bsep" style="left:179px"></div>
<div class="hsep" style="left:229px"></div><div class="bsep" style="left:229px"></div>
<div class="hsep" style="left:803px"></div><div class="bsep" style="left:803px"></div>
<div class="hsep" style="left:903px"></div><div class="bsep" style="left:903px"></div>
<div class="hsep" style="left:1003px"></div><div class="bsep" style="left:1003px"></div>
<div class="sorted" style="left:1003px;width:100px"></div>
<svg style="position:absolute;left:1050px;top:30px" width="7" height="5" viewBox="0 0 7 5"><path d="M0.3 0.3 L3.5 3.9 L6.7 0.3 Z" fill="#a3c1db"/></svg>
<div class="tx " style="left:6px;top:31px;height:20px;line-height:20px;"><span style="transform:scaleX(1.001);transform-origin:left center">Image</span></div>
<div class="tx " style="left:186px;top:31px;height:20px;line-height:20px;"><span style="transform:scaleX(0.871);transform-origin:left center">PID</span></div>
<div class="tx " style="left:236px;top:31px;height:20px;line-height:20px;"><span style="transform:scaleX(0.9861);transform-origin:left center">Address</span></div>
<div class="tx " style="right:223px;top:31px;height:20px;line-height:20px;text-align:right;"><span style="transform:scaleX(0.9325);transform-origin:right center">Send (B/sec)</span></div>
<div class="tx " style="right:123px;top:31px;height:20px;line-height:20px;text-align:right;"><span style="transform:scaleX(0.9153);transform-origin:right center">Receive (B/sec)</span></div>
<div class="tx " style="right:23px;top:31px;height:20px;line-height:20px;text-align:right;"><span style="transform:scaleX(0.9621);transform-origin:right center">Total (B/sec)</span></div>
<div class="tx " style="left:6px;top:54px;height:17px;line-height:17px;"><span style="transform:scaleX(0.8757);transform-origin:left center">OUTLOOK.EXE</span></div>
<div class="tx " style="left:186px;top:54px;height:17px;line-height:17px;"><span style="transform:scaleX(0.9391);transform-origin:left center">5728</span></div>
<div class="tx " style="left:236px;top:54px;height:17px;line-height:17px;"><span style="transform:scaleX(0.9709);transform-origin:left center">sydvmapexchp01.sydney.ssw.com.au</span></div>
<div class="tx " style="right:225px;top:54px;height:17px;line-height:17px;text-align:right;"><span style="transform:scaleX(0.9391);transform-origin:right center">2,843</span></div>
<div class="tx " style="right:125px;top:54px;height:17px;line-height:17px;text-align:right;"><span style="transform:scaleX(0.9391);transform-origin:right center">1,548</span></div>
<div class="tx " style="right:25px;top:54px;height:17px;line-height:17px;text-align:right;"><span style="transform:scaleX(0.9391);transform-origin:right center">4,391</span></div>
<div class="tx " style="left:6px;top:71px;height:17px;line-height:17px;"><span style="transform:scaleX(0.977);transform-origin:left center">iexplore.exe</span></div>
<div class="tx " style="left:186px;top:71px;height:17px;line-height:17px;"><span style="transform:scaleX(0.9391);transform-origin:left center">11776</span></div>
<div class="tx " style="left:236px;top:71px;height:17px;line-height:17px;"><span style="transform:scaleX(0.948);transform-origin:left center">123.125.114.28</span></div>
<div class="tx " style="right:225px;top:71px;height:17px;line-height:17px;text-align:right;"><span style="transform:scaleX(0.9391);transform-origin:right center">33</span></div>
<div class="tx " style="right:125px;top:71px;height:17px;line-height:17px;text-align:right;"><span style="transform:scaleX(0.9391);transform-origin:right center">102</span></div>
<div class="tx " style="right:25px;top:71px;height:17px;line-height:17px;text-align:right;"><span style="transform:scaleX(0.9391);transform-origin:right center">134</span></div>
<div class="tx " style="left:6px;top:88px;height:17px;line-height:17px;"><span style="transform:scaleX(0.9654);transform-origin:left center">wlcomm.exe</span></div>
<div class="tx " style="left:186px;top:88px;height:17px;line-height:17px;"><span style="transform:scaleX(0.9391);transform-origin:left center">12544</span></div>
<div class="tx " style="left:236px;top:88px;height:17px;line-height:17px;"><span style="transform:scaleX(0.9829);transform-origin:left center">by2msg4020504.phx.gbl</span></div>
<div class="tx " style="right:225px;top:88px;height:17px;line-height:17px;text-align:right;"><span style="transform:scaleX(0.9391);transform-origin:right center">0</span></div>
<div class="tx " style="right:125px;top:88px;height:17px;line-height:17px;text-align:right;"><span style="transform:scaleX(0.9391);transform-origin:right center">47</span></div>
<div class="tx " style="right:25px;top:88px;height:17px;line-height:17px;text-align:right;"><span style="transform:scaleX(0.9391);transform-origin:right center">47</span></div>
<div class="tx " style="left:6px;top:105px;height:17px;line-height:17px;"><span style="transform:scaleX(0.9597);transform-origin:left center">svchost.exe (NetworkService)</span></div>
<div class="tx " style="left:186px;top:105px;height:17px;line-height:17px;"><span style="transform:scaleX(0.9391);transform-origin:left center">1484</span></div>
<div class="tx " style="left:236px;top:105px;height:17px;line-height:17px;"><span style="transform:scaleX(0.9379);transform-origin:left center">192.168.20.143</span></div>
<div class="tx " style="right:225px;top:105px;height:17px;line-height:17px;text-align:right;"><span style="transform:scaleX(0.9391);transform-origin:right center">0</span></div>
<div class="tx " style="right:125px;top:105px;height:17px;line-height:17px;text-align:right;"><span style="transform:scaleX(0.9391);transform-origin:right center">31</span></div>
<div class="tx " style="right:25px;top:105px;height:17px;line-height:17px;text-align:right;"><span style="transform:scaleX(0.9391);transform-origin:right center">31</span></div>
<div class="tx " style="left:6px;top:122px;height:17px;line-height:17px;"><span style="transform:scaleX(0.9291);transform-origin:left center">Skype.exe</span></div>
<div class="tx " style="left:186px;top:122px;height:17px;line-height:17px;"><span style="transform:scaleX(0.9391);transform-origin:left center">4240</span></div>
<div class="tx " style="left:236px;top:122px;height:17px;line-height:17px;"><span style="transform:scaleX(0.9574);transform-origin:left center">111.221.74.18</span></div>
<div class="tx " style="right:225px;top:122px;height:17px;line-height:17px;text-align:right;"><span style="transform:scaleX(0.9391);transform-origin:right center">10</span></div>
<div class="tx " style="right:125px;top:122px;height:17px;line-height:17px;text-align:right;"><span style="transform:scaleX(0.9391);transform-origin:right center">14</span></div>
<div class="tx " style="right:25px;top:122px;height:17px;line-height:17px;text-align:right;"><span style="transform:scaleX(0.9391);transform-origin:right center">24</span></div>
<div class="tx " style="left:6px;top:139px;height:17px;line-height:17px;"><span style="transform:scaleX(0.9154);transform-origin:left center">System</span></div>
<div class="tx " style="left:186px;top:139px;height:17px;line-height:17px;"><span style="transform:scaleX(0.9391);transform-origin:left center">4</span></div>
<div class="tx " style="left:236px;top:139px;height:17px;line-height:17px;"><span style="transform:scaleX(0.9379);transform-origin:left center">192.168.1.15</span></div>
<div class="tx " style="right:225px;top:139px;height:17px;line-height:17px;text-align:right;"><span style="transform:scaleX(0.9391);transform-origin:right center">12</span></div>
<div class="tx " style="right:125px;top:139px;height:17px;line-height:17px;text-align:right;"><span style="transform:scaleX(0.9391);transform-origin:right center">12</span></div>
<div class="tx " style="right:25px;top:139px;height:17px;line-height:17px;text-align:right;"><span style="transform:scaleX(0.9391);transform-origin:right center">24</span></div>
<div class="tx " style="left:6px;top:156px;height:17px;line-height:17px;"><span style="transform:scaleX(0.9519);transform-origin:left center">svchost.exe (LocalServiceAndNo...</span></div>
<div class="tx " style="left:186px;top:156px;height:17px;line-height:17px;"><span style="transform:scaleX(0.9391);transform-origin:left center">4060</span></div>
<div class="tx " style="left:236px;top:156px;height:17px;line-height:17px;"><span style="transform:scaleX(0.9368);transform-origin:left center">239.255.255.250</span></div>
<div class="tx " style="right:225px;top:156px;height:17px;line-height:17px;text-align:right;"><span style="transform:scaleX(0.9391);transform-origin:right center">0</span></div>
<div class="tx " style="right:125px;top:156px;height:17px;line-height:17px;text-align:right;"><span style="transform:scaleX(0.9391);transform-origin:right center">13</span></div>
<div class="tx " style="right:25px;top:156px;height:17px;line-height:17px;text-align:right;"><span style="transform:scaleX(0.9391);transform-origin:right center">13</span></div>
<div class="tx " style="left:6px;top:173px;height:17px;line-height:17px;"><span style="transform:scaleX(0.9597);transform-origin:left center">svchost.exe (NetworkService)</span></div>
<div class="tx " style="left:186px;top:173px;height:17px;line-height:17px;"><span style="transform:scaleX(0.9391);transform-origin:left center">1484</span></div>
<div class="tx " style="left:236px;top:173px;height:17px;line-height:17px;"><span style="transform:scaleX(0.9352);transform-origin:left center">192.168.20.52</span></div>
<div class="tx " style="right:225px;top:173px;height:17px;line-height:17px;text-align:right;"><span style="transform:scaleX(0.9391);transform-origin:right center">13</span></div>
<div class="tx " style="right:125px;top:173px;height:17px;line-height:17px;text-align:right;"><span style="transform:scaleX(0.9391);transform-origin:right center">0</span></div>
<div class="tx " style="right:25px;top:173px;height:17px;line-height:17px;text-align:right;"><span style="transform:scaleX(0.9391);transform-origin:right center">13</span></div>
<div class="tx " style="left:6px;top:190px;height:17px;line-height:17px;"><span style="transform:scaleX(0.9291);transform-origin:left center">Skype.exe</span></div>
<div class="tx " style="left:186px;top:190px;height:17px;line-height:17px;"><span style="transform:scaleX(0.9391);transform-origin:left center">4240</span></div>
<div class="tx " style="left:236px;top:190px;height:17px;line-height:17px;"><span style="transform:scaleX(0.9379);transform-origin:left center">192.168.20.143</span></div>
<div class="tx " style="right:225px;top:190px;height:17px;line-height:17px;text-align:right;"><span style="transform:scaleX(0.9391);transform-origin:right center">0</span></div>
<div class="tx " style="right:125px;top:190px;height:17px;line-height:17px;text-align:right;"><span style="transform:scaleX(0.9391);transform-origin:right center">12</span></div>
<div class="tx " style="right:25px;top:190px;height:17px;line-height:17px;text-align:right;"><span style="transform:scaleX(0.9391);transform-origin:right center">12</span></div>
<div class="tx " style="left:6px;top:207px;height:17px;line-height:17px;"><span style="transform:scaleX(0.9291);transform-origin:left center">Skype.exe</span></div>
<div class="tx " style="left:186px;top:207px;height:17px;line-height:17px;"><span style="transform:scaleX(0.9391);transform-origin:left center">4240</span></div>
<div class="tx " style="left:236px;top:207px;height:17px;line-height:17px;"><span style="transform:scaleX(0.9379);transform-origin:left center">213.199.179.146</span></div>
<div class="tx " style="right:225px;top:207px;height:17px;line-height:17px;text-align:right;"><span style="transform:scaleX(0.9391);transform-origin:right center">7</span></div>
<div class="tx " style="right:125px;top:207px;height:17px;line-height:17px;text-align:right;"><span style="transform:scaleX(0.9391);transform-origin:right center">0</span></div>
<div class="tx " style="right:25px;top:207px;height:17px;line-height:17px;text-align:right;"><span style="transform:scaleX(0.9391);transform-origin:right center">7</span></div>
<div class="sbtrack" style="left:1104px;top:29px;width:16px;height:186px"></div>
<svg style="position:absolute;left:1108px;top:35px" width="9" height="5" viewBox="0 0 9 5"><path d="M0.9 4.6 L4.5 0.7 L8.1 4.6 Z" fill="#3a3f47"/></svg>
<svg style="position:absolute;left:1108px;top:203px" width="9" height="5" viewBox="0 0 9 5"><path d="M0.9 0.4 L4.5 4.3 L8.1 0.4 Z" fill="#3a3f47"/></svg>
<div class="thumb" style="left:1104px;top:47px;width:15px;height:29px"></div>
<div class="grip" style="left:1108px;top:57px"><i style="top:0"></i><i style="top:3px"></i><i style="top:6px"></i></div>
</div>
<div class="sec" style="top:748px">
<div class="shead"></div>
<div class="tx stitle" style="left:6px;top:6px;height:18px;line-height:18px;"><span style="transform:scaleX(1.02);transform-origin:left center">Memory</span></div>
<div class="ico" style="left:314px;top:7px"><div style="top:0;height:11px;background:#00ff00"></div><div class="dg" style="top:0;height:11px"></div></div>
<div class="tx " style="left:330px;top:6px;height:17px;line-height:17px;"><span style="transform:scaleX(0.9951);transform-origin:left center">0 Hard Faults/sec</span></div>
<div class="ico" style="left:705px;top:7px"><div style="top:0;height:11px;background:#4da6ff"></div><div class="db" style="top:0;height:6px"></div></div>
<div class="tx " style="left:721px;top:6px;height:17px;line-height:17px;"><span style="transform:scaleX(0.9664);transform-origin:left center">37% Used Physical Memory</span></div>
<div class="circ" style="left:1091px;top:4px"></div>
<svg style="position:absolute;left:1094px;top:8px" width="12" height="9" viewBox="0 0 12 9"><path d="M1.6 7.6 L6 2.8 L10.4 7.6" fill="none" stroke="#0c1a20" stroke-width="2.2"/></svg>
<div class="chead"></div>
<div class="hsep" style="left:179px"></div><div class="bsep" style="left:179px"></div>
<div class="hsep" style="left:229px"></div><div class="bsep" style="left:229px"></div>
<div class="hsep" style="left:703px"></div><div class="bsep" style="left:703px"></div>
<div class="hsep" style="left:803px"></div><div class="bsep" style="left:803px"></div>
<div class="hsep" style="left:903px"></div><div class="bsep" style="left:903px"></div>
<div class="hsep" style="left:1003px"></div><div class="bsep" style="left:1003px"></div>
<div class="sorted" style="left:1003px;width:100px"></div>
<svg style="position:absolute;left:1050px;top:30px" width="7" height="5" viewBox="0 0 7 5"><path d="M0.3 0.3 L3.5 3.9 L6.7 0.3 Z" fill="#a3c1db"/></svg>
<div class="tx " style="left:6px;top:31px;height:20px;line-height:20px;"><span style="transform:scaleX(1.001);transform-origin:left center">Image</span></div>
<div class="tx " style="left:186px;top:31px;height:20px;line-height:20px;"><span style="transform:scaleX(0.871);transform-origin:left center">PID</span></div>
<div class="tx " style="right:423px;top:31px;height:20px;line-height:20px;text-align:right;"><span style="transform:scaleX(0.9932);transform-origin:right center">Hard Faults/sec</span></div>
<div class="tx " style="right:323px;top:31px;height:20px;line-height:20px;text-align:right;"><span style="transform:scaleX(0.942);transform-origin:right center">Commit (KB)</span></div>
<div class="tx " style="right:223px;top:31px;height:20px;line-height:20px;text-align:right;"><span style="transform:scaleX(0.9872);transform-origin:right center">Working Set (KB)</span></div>
<div class="tx " style="right:123px;top:31px;height:20px;line-height:20px;text-align:right;"><span style="transform:scaleX(0.9474);transform-origin:right center">Shareable (KB)</span></div>
<div class="tx " style="right:23px;top:31px;height:20px;line-height:20px;text-align:right;"><span style="transform:scaleX(0.9194);transform-origin:right center">Private (KB)</span></div>
<div class="tx " style="left:6px;top:54px;height:17px;line-height:17px;"><span style="transform:scaleX(0.8757);transform-origin:left center">OUTLOOK.EXE</span></div>
<div class="tx " style="left:186px;top:54px;height:17px;line-height:17px;"><span style="transform:scaleX(0.9391);transform-origin:left center">5728</span></div>
<div class="tx " style="right:425px;top:54px;height:17px;line-height:17px;text-align:right;"><span style="transform:scaleX(0.9391);transform-origin:right center">0</span></div>
<div class="tx " style="right:325px;top:54px;height:17px;line-height:17px;text-align:right;"><span style="transform:scaleX(0.9391);transform-origin:right center">572,848</span></div>
<div class="tx " style="right:225px;top:54px;height:17px;line-height:17px;text-align:right;"><span style="transform:scaleX(0.9391);transform-origin:right center">527,028</span></div>
<div class="tx " style="right:125px;top:54px;height:17px;line-height:17px;text-align:right;"><span style="transform:scaleX(0.9391);transform-origin:right center">137,512</span></div>
<div class="tx " style="right:25px;top:54px;height:17px;line-height:17px;text-align:right;"><span style="transform:scaleX(0.9391);transform-origin:right center">389,516</span></div>
<div class="tx " style="left:6px;top:71px;height:17px;line-height:17px;"><span style="transform:scaleX(0.977);transform-origin:left center">iexplore.exe</span></div>
<div class="tx " style="left:186px;top:71px;height:17px;line-height:17px;"><span style="transform:scaleX(0.9391);transform-origin:left center">11652</span></div>
<div class="tx " style="right:425px;top:71px;height:17px;line-height:17px;text-align:right;"><span style="transform:scaleX(0.9391);transform-origin:right center">0</span></div>
<div class="tx " style="right:325px;top:71px;height:17px;line-height:17px;text-align:right;"><span style="transform:scaleX(0.9391);transform-origin:right center">195,300</span></div>
<div class="tx " style="right:225px;top:71px;height:17px;line-height:17px;text-align:right;"><span style="transform:scaleX(0.9391);transform-origin:right center">218,828</span></div>
<div class="tx " style="right:125px;top:71px;height:17px;line-height:17px;text-align:right;"><span style="transform:scaleX(0.9391);transform-origin:right center">59,236</span></div>
<div class="tx " style="right:25px;top:71px;height:17px;line-height:17px;text-align:right;"><span style="transform:scaleX(0.9391);transform-origin:right center">159,592</span></div>
<div class="tx " style="left:6px;top:88px;height:17px;line-height:17px;"><span style="transform:scaleX(0.977);transform-origin:left center">iexplore.exe</span></div>
<div class="tx " style="left:186px;top:88px;height:17px;line-height:17px;"><span style="transform:scaleX(0.9391);transform-origin:left center">11776</span></div>
<div class="tx " style="right:425px;top:88px;height:17px;line-height:17px;text-align:right;"><span style="transform:scaleX(0.9391);transform-origin:right center">0</span></div>
<div class="tx " style="right:325px;top:88px;height:17px;line-height:17px;text-align:right;"><span style="transform:scaleX(0.9391);transform-origin:right center">195,004</span></div>
<div class="tx " style="right:225px;top:88px;height:17px;line-height:17px;text-align:right;"><span style="transform:scaleX(0.9391);transform-origin:right center">216,756</span></div>
<div class="tx " style="right:125px;top:88px;height:17px;line-height:17px;text-align:right;"><span style="transform:scaleX(0.9391);transform-origin:right center">57,636</span></div>
<div class="tx " style="right:25px;top:88px;height:17px;line-height:17px;text-align:right;"><span style="transform:scaleX(0.9391);transform-origin:right center">159,120</span></div>
<div class="tx " style="left:6px;top:105px;height:17px;line-height:17px;"><span style="transform:scaleX(0.977);transform-origin:left center">iexplore.exe</span></div>
<div class="tx " style="left:186px;top:105px;height:17px;line-height:17px;"><span style="transform:scaleX(0.9391);transform-origin:left center">7912</span></div>
<div class="tx " style="right:425px;top:105px;height:17px;line-height:17px;text-align:right;"><span style="transform:scaleX(0.9391);transform-origin:right center">0</span></div>
<div class="tx " style="right:325px;top:105px;height:17px;line-height:17px;text-align:right;"><span style="transform:scaleX(0.9391);transform-origin:right center">194,924</span></div>
<div class="tx " style="right:225px;top:105px;height:17px;line-height:17px;text-align:right;"><span style="transform:scaleX(0.9391);transform-origin:right center">218,036</span></div>
<div class="tx " style="right:125px;top:105px;height:17px;line-height:17px;text-align:right;"><span style="transform:scaleX(0.9391);transform-origin:right center">66,936</span></div>
<div class="tx " style="right:25px;top:105px;height:17px;line-height:17px;text-align:right;"><span style="transform:scaleX(0.9391);transform-origin:right center">151,100</span></div>
<div class="tx " style="left:6px;top:122px;height:17px;line-height:17px;"><span style="transform:scaleX(0.9799);transform-origin:left center">dwm.exe</span></div>
<div class="tx " style="left:186px;top:122px;height:17px;line-height:17px;"><span style="transform:scaleX(0.9391);transform-origin:left center">2640</span></div>
<div class="tx " style="right:425px;top:122px;height:17px;line-height:17px;text-align:right;"><span style="transform:scaleX(0.9391);transform-origin:right center">0</span></div>
<div class="tx " style="right:325px;top:122px;height:17px;line-height:17px;text-align:right;"><span style="transform:scaleX(0.9391);transform-origin:right center">157,240</span></div>
<div class="tx " style="right:225px;top:122px;height:17px;line-height:17px;text-align:right;"><span style="transform:scaleX(0.9391);transform-origin:right center">163,428</span></div>
<div class="tx " style="right:125px;top:122px;height:17px;line-height:17px;text-align:right;"><span style="transform:scaleX(0.9391);transform-origin:right center">19,580</span></div>
<div class="tx " style="right:25px;top:122px;height:17px;line-height:17px;text-align:right;"><span style="transform:scaleX(0.9391);transform-origin:right center">143,848</span></div>
<div class="tx " style="left:6px;top:139px;height:17px;line-height:17px;"><span style="transform:scaleX(0.977);transform-origin:left center">iexplore.exe</span></div>
<div class="tx " style="left:186px;top:139px;height:17px;line-height:17px;"><span style="transform:scaleX(0.9391);transform-origin:left center">9144</span></div>
<div class="tx " style="right:425px;top:139px;height:17px;line-height:17px;text-align:right;"><span style="transform:scaleX(0.9391);transform-origin:right center">0</span></div>
<div class="tx " style="right:325px;top:139px;height:17px;line-height:17px;text-align:right;"><span style="transform:scaleX(0.9391);transform-origin:right center">179,200</span></div>
<div class="tx " style="right:225px;top:139px;height:17px;line-height:17px;text-align:right;"><span style="transform:scaleX(0.9391);transform-origin:right center">174,068</span></div>
<div class="tx " style="right:125px;top:139px;height:17px;line-height:17px;text-align:right;"><span style="transform:scaleX(0.9391);transform-origin:right center">52,384</span></div>
<div class="tx " style="right:25px;top:139px;height:17px;line-height:17px;text-align:right;"><span style="transform:scaleX(0.9391);transform-origin:right center">121,684</span></div>
<div class="tx " style="left:6px;top:156px;height:17px;line-height:17px;"><span style="transform:scaleX(0.977);transform-origin:left center">iexplore.exe</span></div>
<div class="tx " style="left:186px;top:156px;height:17px;line-height:17px;"><span style="transform:scaleX(0.9391);transform-origin:left center">5356</span></div>
<div class="tx " style="right:425px;top:156px;height:17px;line-height:17px;text-align:right;"><span style="transform:scaleX(0.9391);transform-origin:right center">0</span></div>
<div class="tx " style="right:325px;top:156px;height:17px;line-height:17px;text-align:right;"><span style="transform:scaleX(0.9391);transform-origin:right center">156,924</span></div>
<div class="tx " style="right:225px;top:156px;height:17px;line-height:17px;text-align:right;"><span style="transform:scaleX(0.9391);transform-origin:right center">170,672</span></div>
<div class="tx " style="right:125px;top:156px;height:17px;line-height:17px;text-align:right;"><span style="transform:scaleX(0.9391);transform-origin:right center">55,684</span></div>
<div class="tx " style="right:25px;top:156px;height:17px;line-height:17px;text-align:right;"><span style="transform:scaleX(0.9391);transform-origin:right center">114,988</span></div>
<div class="tx " style="left:6px;top:173px;height:17px;line-height:17px;"><span style="transform:scaleX(0.977);transform-origin:left center">iexplore.exe</span></div>
<div class="tx " style="left:186px;top:173px;height:17px;line-height:17px;"><span style="transform:scaleX(0.9391);transform-origin:left center">12960</span></div>
<div class="tx " style="right:425px;top:173px;height:17px;line-height:17px;text-align:right;"><span style="transform:scaleX(0.9391);transform-origin:right center">0</span></div>
<div class="tx " style="right:325px;top:173px;height:17px;line-height:17px;text-align:right;"><span style="transform:scaleX(0.9391);transform-origin:right center">131,968</span></div>
<div class="tx " style="right:225px;top:173px;height:17px;line-height:17px;text-align:right;"><span style="transform:scaleX(0.9391);transform-origin:right center">149,840</span></div>
<div class="tx " style="right:125px;top:173px;height:17px;line-height:17px;text-align:right;"><span style="transform:scaleX(0.9391);transform-origin:right center">45,828</span></div>
<div class="tx " style="right:25px;top:173px;height:17px;line-height:17px;text-align:right;"><span style="transform:scaleX(0.9391);transform-origin:right center">104,012</span></div>
<div class="tx " style="left:6px;top:190px;height:17px;line-height:17px;"><span style="transform:scaleX(0.9291);transform-origin:left center">Skype.exe</span></div>
<div class="tx " style="left:186px;top:190px;height:17px;line-height:17px;"><span style="transform:scaleX(0.9391);transform-origin:left center">4240</span></div>
<div class="tx " style="right:425px;top:190px;height:17px;line-height:17px;text-align:right;"><span style="transform:scaleX(0.9391);transform-origin:right center">0</span></div>
<div class="tx " style="right:325px;top:190px;height:17px;line-height:17px;text-align:right;"><span style="transform:scaleX(0.9391);transform-origin:right center">157,212</span></div>
<div class="tx " style="right:225px;top:190px;height:17px;line-height:17px;text-align:right;"><span style="transform:scaleX(0.9391);transform-origin:right center">124,960</span></div>
<div class="tx " style="right:125px;top:190px;height:17px;line-height:17px;text-align:right;"><span style="transform:scaleX(0.9391);transform-origin:right center">28,960</span></div>
<div class="tx " style="right:25px;top:190px;height:17px;line-height:17px;text-align:right;"><span style="transform:scaleX(0.9391);transform-origin:right center">96,000</span></div>
<div class="tx " style="left:6px;top:207px;height:17px;line-height:17px;"><span style="transform:scaleX(0.977);transform-origin:left center">iexplore.exe</span></div>
<div class="tx " style="left:186px;top:207px;height:17px;line-height:17px;"><span style="transform:scaleX(0.9391);transform-origin:left center">10764</span></div>
<div class="tx " style="right:425px;top:207px;height:17px;line-height:17px;text-align:right;"><span style="transform:scaleX(0.9391);transform-origin:right center">0</span></div>
<div class="tx " style="right:325px;top:207px;height:17px;line-height:17px;text-align:right;"><span style="transform:scaleX(0.9391);transform-origin:right center">127,892</span></div>
<div class="tx " style="right:225px;top:207px;height:17px;line-height:17px;text-align:right;"><span style="transform:scaleX(0.9391);transform-origin:right center">120,916</span></div>
<div class="tx " style="right:125px;top:207px;height:17px;line-height:17px;text-align:right;"><span style="transform:scaleX(0.9391);transform-origin:right center">48,148</span></div>
<div class="tx " style="right:25px;top:207px;height:17px;line-height:17px;text-align:right;"><span style="transform:scaleX(0.9391);transform-origin:right center">82,768</span></div>
<div class="sbtrack" style="left:1104px;top:29px;width:16px;height:186px"></div>
<svg style="position:absolute;left:1108px;top:35px" width="9" height="5" viewBox="0 0 9 5"><path d="M0.9 4.6 L4.5 0.7 L8.1 4.6 Z" fill="#3a3f47"/></svg>
<svg style="position:absolute;left:1108px;top:203px" width="9" height="5" viewBox="0 0 9 5"><path d="M0.9 0.4 L4.5 4.3 L8.1 0.4 Z" fill="#3a3f47"/></svg>
<div class="thumb" style="left:1104px;top:47px;width:15px;height:15px"></div>
</div>
<div class="sbtrack" style="left:1133px;top:80px;width:16px;height:992px"></div>
<svg style="position:absolute;left:1137px;top:86px" width="9" height="5" viewBox="0 0 9 5"><path d="M0.9 4.6 L4.5 0.7 L8.1 4.6 Z" fill="#3a3f47"/></svg>
<svg style="position:absolute;left:1137px;top:1061px" width="9" height="5" viewBox="0 0 9 5"><path d="M0.9 0.4 L4.5 4.3 L8.1 0.4 Z" fill="#3a3f47"/></svg>
<div class="thumb" style="left:1133px;top:97px;width:15px;height:956px"></div>
<div class="grip" style="left:1137px;top:571px"><i style="top:0"></i><i style="top:3px"></i><i style="top:6px"></i></div>
<div style="left:1149px;top:80px;width:1px;height:992px;background:#646464"></div>
<div class="sbtrack" style="left:1357px;top:80px;width:16px;height:992px"></div>
<svg style="position:absolute;left:1361px;top:86px" width="9" height="5" viewBox="0 0 9 5"><path d="M0.9 4.6 L4.5 0.7 L8.1 4.6 Z" fill="#3a3f47"/></svg>
<svg style="position:absolute;left:1361px;top:1061px" width="9" height="5" viewBox="0 0 9 5"><path d="M0.9 0.4 L4.5 4.3 L8.1 0.4 Z" fill="#3a3f47"/></svg>
<div class="thumb" style="left:1357px;top:97px;width:15px;height:956px"></div>
<div class="grip" style="left:1361px;top:571px"><i style="top:0"></i><i style="top:3px"></i><i style="top:6px"></i></div>
<div style="left:1155px;top:82px;width:200px;height:591px;border:1px solid #6c6c6c;background:#fff"></div>
<div class="shead" style="left:1156px;top:83px;width:198px"></div>
<div class="circ" style="left:1166px;top:87px"></div>
<svg style="position:absolute;left:1171px;top:91px" width="9" height="12" viewBox="0 0 9 12"><path d="M2.2 1.6 L7 6 L2.2 10.4" fill="none" stroke="#0c1a20" stroke-width="2.2"/></svg>
<div class="vbtn" style="left:1255px;top:85px;width:86px;height:24px"></div>
<div style="left:1327px;top:89px;width:1px;height:17px;background:#6d6d6d"></div>
<svg style="position:absolute;left:1329px;top:95px" width="9" height="5" viewBox="0 0 9 5"><path d="M0.3 0.3 L4.5 4.7 L8.7 0.3 Z" fill="#000"/></svg>
<div class="tx " style="left:1275px;top:87px;height:20px;line-height:20px;"><span style="transform:scaleX(1.0172);transform-origin:left center">Views</span></div>
<div class="tx " style="left:1168px;top:116px;height:17px;line-height:17px;"><span style="transform:scaleX(0.9471);transform-origin:left center">CPU</span></div>
<div class="tx " style="right:46px;top:116px;height:17px;line-height:17px;text-align:right;"><span style="transform:scaleX(0.9857);transform-origin:right center">100%</span></div>
<div class="tx " style="left:1168px;top:237px;height:17px;line-height:17px;"><span style="transform:scaleX(0.9843);transform-origin:left center">60 Seconds</span></div>
<div class="tx " style="right:46px;top:237px;height:17px;line-height:17px;text-align:right;"><span style="transform:scaleX(1.0346);transform-origin:right center">0%</span></div>
<div style="left:1339px;top:123px;width:6px;height:124px;border:1px solid #000;border-left:none"></div>
<svg style="position:absolute;left:1166px;top:133px" width="172" height="104" viewBox="0 0 172 104"><defs><clipPath id="cg0"><rect x="2" y="2" width="168" height="100"/></clipPath><clipPath id="fg0"><polygon points="1.99,102 1.99,83.77 4.98,88.13 11.83,88.13 14.32,86.27 17.43,79.42 20.55,86.89 23.41,72.94 26.4,89.38 29.51,78.42 32.63,86.89 35.49,86.27 38.61,90.37 41.72,87.51 44.58,82.53 47.95,86.89 50.44,88.13 52.93,87.14 56.66,89.63 59.78,88.13 62.89,88.13 65.38,86.51 68.49,88.13 70.98,87.14 74.72,89.38 77.83,89.63 82.19,87.51 86.8,84.15 89.66,85.64 92.78,86.27 97.76,88.38 102.12,88.38 104.61,87.14 108.34,87.14 110.21,88.13 112.7,87.14 116.44,89.38 119.55,87.14 124.53,87.14 128.27,88.38 131.38,88.38 135.12,86.27 136.99,87.51 140.1,86.27 143.21,86.64 146.58,89.63 151.31,86.27 155.04,86.27 158.78,89.63 161.27,89.38 165.01,87.26 169.99,87.26 169.99,102"/></clipPath></defs><rect x="0" y="0" width="171" height="103" fill="#a0a0a0"/><rect x="1" y="1" width="170" height="102" fill="#696969"/><rect x="170" y="1" width="1" height="102" fill="#e3e3e3"/><rect x="1" y="102" width="170" height="1" fill="#e3e3e3"/><rect x="171" y="0" width="1" height="104" fill="#fff"/><rect x="0" y="103" width="172" height="1" fill="#fff"/><rect x="2" y="2" width="168" height="100" fill="#000"/><g clip-path="url(#cg0)"><polygon points="1.99,102 1.99,83.77 4.98,88.13 11.83,88.13 14.32,86.27 17.43,79.42 20.55,86.89 23.41,72.94 26.4,89.38 29.51,78.42 32.63,86.89 35.49,86.27 38.61,90.37 41.72,87.51 44.58,82.53 47.95,86.89 50.44,88.13 52.93,87.14 56.66,89.63 59.78,88.13 62.89,88.13 65.38,86.51 68.49,88.13 70.98,87.14 74.72,89.38 77.83,89.63 82.19,87.51 86.8,84.15 89.66,85.64 92.78,86.27 97.76,88.38 102.12,88.38 104.61,87.14 108.34,87.14 110.21,88.13 112.7,87.14 116.44,89.38 119.55,87.14 124.53,87.14 128.27,88.38 131.38,88.38 135.12,86.27 136.99,87.51 140.1,86.27 143.21,86.64 146.58,89.63 151.31,86.27 155.04,86.27 158.78,89.63 161.27,89.38 165.01,87.26 169.99,87.26 169.99,102" fill="#006400"/><g fill="#008000" shape-rendering="crispEdges"><rect x="2" y="2" width="1" height="100"/><rect x="17" y="2" width="1" height="100"/><rect x="32" y="2" width="1" height="100"/><rect x="47" y="2" width="1" height="100"/><rect x="62" y="2" width="1" height="100"/><rect x="77" y="2" width="1" height="100"/><rect x="92" y="2" width="1" height="100"/><rect x="107" y="2" width="1" height="100"/><rect x="122" y="2" width="1" height="100"/><rect x="137" y="2" width="1" height="100"/><rect x="152" y="2" width="1" height="100"/><rect x="167" y="2" width="1" height="100"/><rect x="2" y="12" width="168" height="1"/><rect x="2" y="22" width="168" height="1"/><rect x="2" y="32" width="168" height="1"/><rect x="2" y="42" width="168" height="1"/><rect x="2" y="52" width="168" height="1"/><rect x="2" y="62" width="168" height="1"/><rect x="2" y="72" width="168" height="1"/><rect x="2" y="82" width="168" height="1"/><rect x="2" y="92" width="168" height="1"/></g><g clip-path="url(#fg0)"><g fill="#00e800" shape-rendering="crispEdges"><rect x="2" y="2" width="1" height="100"/><rect x="17" y="2" width="1" height="100"/><rect x="32" y="2" width="1" height="100"/><rect x="47" y="2" width="1" height="100"/><rect x="62" y="2" width="1" height="100"/><rect x="77" y="2" width="1" height="100"/><rect x="92" y="2" width="1" height="100"/><rect x="107" y="2" width="1" height="100"/><rect x="122" y="2" width="1" height="100"/><rect x="137" y="2" width="1" height="100"/><rect x="152" y="2" width="1" height="100"/><rect x="167" y="2" width="1" height="100"/><rect x="2" y="12" width="168" height="1"/><rect x="2" y="22" width="168" height="1"/><rect x="2" y="32" width="168" height="1"/><rect x="2" y="42" width="168" height="1"/><rect x="2" y="52" width="168" height="1"/><rect x="2" y="62" width="168" height="1"/><rect x="2" y="72" width="168" height="1"/><rect x="2" y="82" width="168" height="1"/><rect x="2" y="92" width="168" height="1"/></g></g><polyline points="1.99,83.77 4.98,88.13 11.83,88.13 14.32,86.27 17.43,79.42 20.55,86.89 23.41,72.94 26.4,89.38 29.51,78.42 32.63,86.89 35.49,86.27 38.61,90.37 41.72,87.51 44.58,82.53 47.95,86.89 50.44,88.13 52.93,87.14 56.66,89.63 59.78,88.13 62.89,88.13 65.38,86.51 68.49,88.13 70.98,87.14 74.72,89.38 77.83,89.63 82.19,87.51 86.8,84.15 89.66,85.64 92.78,86.27 97.76,88.38 102.12,88.38 104.61,87.14 108.34,87.14 110.21,88.13 112.7,87.14 116.44,89.38 119.55,87.14 124.53,87.14 128.27,88.38 131.38,88.38 135.12,86.27 136.99,87.51 140.1,86.27 143.21,86.64 146.58,89.63 151.31,86.27 155.04,86.27 158.78,89.63 161.27,89.38 165.01,87.26 169.99,87.26" fill="none" stroke="#00ff00" stroke-width="1.15" stroke-linejoin="miter"/><rect x="2" y="2" width="168" height="2" fill="#3c8cf0"/><rect x="2" y="4" width="168" height="0.5" fill="#400030"/></g></svg>
<div class="tx " style="left:1168px;top:254px;height:17px;line-height:17px;"><span style="transform:scaleX(1.0285);transform-origin:left center">Disk</span></div>
<div class="tx " style="right:46px;top:254px;height:17px;line-height:17px;text-align:right;"><span style="transform:scaleX(0.986);transform-origin:right center">100 KB/sec</span></div>
<div class="tx " style="right:46px;top:375px;height:17px;line-height:17px;text-align:right;"><span style="transform:scaleX(0.9391);transform-origin:right center">0</span></div>
<div style="left:1339px;top:261px;width:6px;height:124px;border:1px solid #000;border-left:none"></div>
<svg style="position:absolute;left:1166px;top:271px" width="172" height="104" viewBox="0 0 172 104"><defs><clipPath id="cg1"><rect x="2" y="2" width="168" height="100"/></clipPath><clipPath id="fg1"><polygon points="1.99,102 1.99,104.35 5.6,91.02 8.72,100.36 11.46,77.95 14.94,97.87 17.43,89.15 20.55,77.95 25.53,104.35 26.77,72.97 27.4,14.43 28.89,13.19 29.27,0.74 30.51,0.74 31.13,13.19 32.13,14.43 32.63,72.97 33.62,76.7 35.49,52.42 36.74,61.76 37.36,77.95 38.85,104.35 41.1,89.15 42.34,58.02 43.34,29.38 44.83,28.13 45.08,0.74 46.08,0.74 46.7,34.36 47.95,0.74 49.81,0.74 50.44,89.15 52.3,95.38 54.79,104.35 56.04,89.15 57.29,61.13 58.53,33.11 59.53,19.17 60.4,33.11 61.89,61.13 62.27,89.15 64.13,69.23 65.63,62.38 67.25,82.93 68.24,96.63 69.12,91.65 71.61,72.34 73.47,48.06 74.47,22.53 75.34,0.74 76.59,0.74 77.21,40.59 78.21,0.74 79.7,0.74 79.7,43.08 80.95,69.23 85.93,99.12 87.17,104.35 89.04,76.7 90.29,40.59 91.53,4.47 92.78,0.74 93.65,0.74 94.02,25.02 95.64,50.55 96.51,69.23 98.38,104.35 103.99,104.35 104.61,89.15 105.85,61.13 107.1,30.62 107.72,19.17 108.34,30.62 109.59,51.17 110.83,72.97 112.7,97.87 113.33,84.17 114.57,46.81 115.82,9.45 116.44,0.74 117.06,9.45 118.31,46.81 119.55,18.17 120.8,0.74 122.67,0.74 123.29,71.72 124.53,0.74 125.16,0.74 125.53,78.57 126.77,0.74 130.76,0.74 131.38,21.91 132.63,9.45 134.25,5.97 135.12,21.91 135.74,21.91 137.61,0.74 145.7,0.74 145.7,56.15 147.57,91.65 148.82,97.87 149.44,89.15 150.93,62.38 151.68,36.85 152.55,23.15 153.42,36.85 154.42,62.38 155.67,89.15 156.91,71.72 158.16,42.45 159.4,51.17 160.65,84.17 161.89,94.14 164.38,94.14 167.5,86.04 168.74,95.38 169.99,95.38 169.99,102"/></clipPath></defs><rect x="0" y="0" width="171" height="103" fill="#a0a0a0"/><rect x="1" y="1" width="170" height="102" fill="#696969"/><rect x="170" y="1" width="1" height="102" fill="#e3e3e3"/><rect x="1" y="102" width="170" height="1" fill="#e3e3e3"/><rect x="171" y="0" width="1" height="104" fill="#fff"/><rect x="0" y="103" width="172" height="1" fill="#fff"/><rect x="2" y="2" width="168" height="100" fill="#000"/><g clip-path="url(#cg1)"><polygon points="1.99,102 1.99,104.35 5.6,91.02 8.72,100.36 11.46,77.95 14.94,97.87 17.43,89.15 20.55,77.95 25.53,104.35 26.77,72.97 27.4,14.43 28.89,13.19 29.27,0.74 30.51,0.74 31.13,13.19 32.13,14.43 32.63,72.97 33.62,76.7 35.49,52.42 36.74,61.76 37.36,77.95 38.85,104.35 41.1,89.15 42.34,58.02 43.34,29.38 44.83,28.13 45.08,0.74 46.08,0.74 46.7,34.36 47.95,0.74 49.81,0.74 50.44,89.15 52.3,95.38 54.79,104.35 56.04,89.15 57.29,61.13 58.53,33.11 59.53,19.17 60.4,33.11 61.89,61.13 62.27,89.15 64.13,69.23 65.63,62.38 67.25,82.93 68.24,96.63 69.12,91.65 71.61,72.34 73.47,48.06 74.47,22.53 75.34,0.74 76.59,0.74 77.21,40.59 78.21,0.74 79.7,0.74 79.7,43.08 80.95,69.23 85.93,99.12 87.17,104.35 89.04,76.7 90.29,40.59 91.53,4.47 92.78,0.74 93.65,0.74 94.02,25.02 95.64,50.55 96.51,69.23 98.38,104.35 103.99,104.35 104.61,89.15 105.85,61.13 107.1,30.62 107.72,19.17 108.34,30.62 109.59,51.17 110.83,72.97 112.7,97.87 113.33,84.17 114.57,46.81 115.82,9.45 116.44,0.74 117.06,9.45 118.31,46.81 119.55,18.17 120.8,0.74 122.67,0.74 123.29,71.72 124.53,0.74 125.16,0.74 125.53,78.57 126.77,0.74 130.76,0.74 131.38,21.91 132.63,9.45 134.25,5.97 135.12,21.91 135.74,21.91 137.61,0.74 145.7,0.74 145.7,56.15 147.57,91.65 148.82,97.87 149.44,89.15 150.93,62.38 151.68,36.85 152.55,23.15 153.42,36.85 154.42,62.38 155.67,89.15 156.91,71.72 158.16,42.45 159.4,51.17 160.65,84.17 161.89,94.14 164.38,94.14 167.5,86.04 168.74,95.38 169.99,95.38 169.99,102" fill="#006400"/><g fill="#008000" shape-rendering="crispEdges"><rect x="2" y="2" width="1" height="100"/><rect x="17" y="2" width="1" height="100"/><rect x="32" y="2" width="1" height="100"/><rect x="47" y="2" width="1" height="100"/><rect x="62" y="2" width="1" height="100"/><rect x="77" y="2" width="1" height="100"/><rect x="92" y="2" width="1" height="100"/><rect x="107" y="2" width="1" height="100"/><rect x="122" y="2" width="1" height="100"/><rect x="137" y="2" width="1" height="100"/><rect x="152" y="2" width="1" height="100"/><rect x="167" y="2" width="1" height="100"/><rect x="2" y="12" width="168" height="1"/><rect x="2" y="22" width="168" height="1"/><rect x="2" y="32" width="168" height="1"/><rect x="2" y="42" width="168" height="1"/><rect x="2" y="52" width="168" height="1"/><rect x="2" y="62" width="168" height="1"/><rect x="2" y="72" width="168" height="1"/><rect x="2" y="82" width="168" height="1"/><rect x="2" y="92" width="168" height="1"/></g><g clip-path="url(#fg1)"><g fill="#00e800" shape-rendering="crispEdges"><rect x="2" y="2" width="1" height="100"/><rect x="17" y="2" width="1" height="100"/><rect x="32" y="2" width="1" height="100"/><rect x="47" y="2" width="1" height="100"/><rect x="62" y="2" width="1" height="100"/><rect x="77" y="2" width="1" height="100"/><rect x="92" y="2" width="1" height="100"/><rect x="107" y="2" width="1" height="100"/><rect x="122" y="2" width="1" height="100"/><rect x="137" y="2" width="1" height="100"/><rect x="152" y="2" width="1" height="100"/><rect x="167" y="2" width="1" height="100"/><rect x="2" y="12" width="168" height="1"/><rect x="2" y="22" width="168" height="1"/><rect x="2" y="32" width="168" height="1"/><rect x="2" y="42" width="168" height="1"/><rect x="2" y="52" width="168" height="1"/><rect x="2" y="62" width="168" height="1"/><rect x="2" y="72" width="168" height="1"/><rect x="2" y="82" width="168" height="1"/><rect x="2" y="92" width="168" height="1"/></g></g><polyline points="1.99,104.35 5.6,91.02 8.72,100.36 11.46,77.95 14.94,97.87 17.43,89.15 20.55,77.95 25.53,104.35 26.77,72.97 27.4,14.43 28.89,13.19 29.27,0.74 30.51,0.74 31.13,13.19 32.13,14.43 32.63,72.97 33.62,76.7 35.49,52.42 36.74,61.76 37.36,77.95 38.85,104.35 41.1,89.15 42.34,58.02 43.34,29.38 44.83,28.13 45.08,0.74 46.08,0.74 46.7,34.36 47.95,0.74 49.81,0.74 50.44,89.15 52.3,95.38 54.79,104.35 56.04,89.15 57.29,61.13 58.53,33.11 59.53,19.17 60.4,33.11 61.89,61.13 62.27,89.15 64.13,69.23 65.63,62.38 67.25,82.93 68.24,96.63 69.12,91.65 71.61,72.34 73.47,48.06 74.47,22.53 75.34,0.74 76.59,0.74 77.21,40.59 78.21,0.74 79.7,0.74 79.7,43.08 80.95,69.23 85.93,99.12 87.17,104.35 89.04,76.7 90.29,40.59 91.53,4.47 92.78,0.74 93.65,0.74 94.02,25.02 95.64,50.55 96.51,69.23 98.38,104.35 103.99,104.35 104.61,89.15 105.85,61.13 107.1,30.62 107.72,19.17 108.34,30.62 109.59,51.17 110.83,72.97 112.7,97.87 113.33,84.17 114.57,46.81 115.82,9.45 116.44,0.74 117.06,9.45 118.31,46.81 119.55,18.17 120.8,0.74 122.67,0.74 123.29,71.72 124.53,0.74 125.16,0.74 125.53,78.57 126.77,0.74 130.76,0.74 131.38,21.91 132.63,9.45 134.25,5.97 135.12,21.91 135.74,21.91 137.61,0.74 145.7,0.74 145.7,56.15 147.57,91.65 148.82,97.87 149.44,89.15 150.93,62.38 151.68,36.85 152.55,23.15 153.42,36.85 154.42,62.38 155.67,89.15 156.91,71.72 158.16,42.45 159.4,51.17 160.65,84.17 161.89,94.14 164.38,94.14 167.5,86.04 168.74,95.38 169.99,95.38" fill="none" stroke="#00ff00" stroke-width="1.15" stroke-linejoin="miter"/><polyline points="22.42,104.35 41.1,104.35 44.21,94.76 47.32,104.35 49.81,104.35 52.93,100.61 54.79,104.35 68.49,104.35 71.61,100.61 74.72,104.35 77.46,99.86 80.32,104.35 87.17,104.35 92.15,92.89 95.27,100.99 97.14,104.35 115.82,104.35 119.55,101.36 122.29,96.63 124.53,101.36 125.78,104.35 138.23,104.35 141.34,99.74 143.21,99.74 145.7,104.35 158.16,104.35 161.27,100.61 163.14,104.35" fill="none" stroke="#4080f0" stroke-width="1.6"/></g></svg>
<div class="tx " style="left:1168px;top:392px;height:17px;line-height:17px;"><span style="transform:scaleX(1.0786);transform-origin:left center">Network</span></div>
<div class="tx " style="right:46px;top:392px;height:17px;line-height:17px;text-align:right;"><span style="transform:scaleX(0.9875);transform-origin:right center">100 Kbps</span></div>
<div class="tx " style="right:46px;top:513px;height:17px;line-height:17px;text-align:right;"><span style="transform:scaleX(0.9391);transform-origin:right center">0</span></div>
<div style="left:1339px;top:399px;width:6px;height:124px;border:1px solid #000;border-left:none"></div>
<svg style="position:absolute;left:1166px;top:409px" width="172" height="104" viewBox="0 0 172 104"><defs><clipPath id="cg2"><rect x="2" y="2" width="168" height="100"/></clipPath><clipPath id="fg2"><polygon points="1.99,102 1.99,100.99 4.98,99.74 8.47,95.38 11.83,104.35 14.94,104.35 17.43,99.12 19.3,100.36 23.66,94.14 26.77,96.0 29.27,96.0 29.89,86.04 30.88,66.12 31.76,46.19 32.63,35.61 35.49,33.74 36.74,20.66 38.61,5.09 39.6,20.66 40.1,53.04 41.1,84.17 41.72,100.36 44.21,94.14 44.83,89.15 46.33,70.47 47.95,23.15 49.19,0.74 51.68,0.74 52.3,8.21 53.3,26.89 54.55,46.19 55.42,70.47 56.66,95.38 58.53,100.99 59.78,96.63 61.02,71.72 62.89,64.87 65.38,58.02 67.25,48.06 68.49,36.85 69.49,48.06 70.36,67.98 71.61,97.25 72.23,81.68 73.47,70.47 74.72,44.95 75.97,6.34 76.59,0.74 85.31,0.74 86.18,11.94 86.92,50.55 88.67,70.47 89.04,89.78 89.91,99.12 92.15,92.89 94.89,92.89 95.64,84.17 96.89,64.25 98.38,33.74 99.38,46.19 100.25,67.98 101.12,89.78 102.12,100.36 103.99,99.12 107.1,104.35 113.95,104.35 117.06,100.36 118.93,100.36 119.55,85.42 120.8,53.04 121.42,21.28 122.67,3.85 123.91,20.04 125.16,30.0 126.4,43.08 127.65,58.02 128.89,80.44 130.14,70.47 131.76,67.36 136.99,69.23 140.1,69.23 141.97,71.72 143.84,79.19 146.7,97.25 147.95,82.93 149.44,68.61 151.93,68.61 153.42,74.21 154.42,86.66 155.42,97.87 156.29,85.42 158.16,67.36 159.4,74.21 160.02,82.93 161.27,97.25 161.89,82.93 162.52,51.17 163.39,20.04 164.63,3.85 166.25,20.04 167.5,46.81 168.37,48.06 169.12,70.47 169.99,70.47 169.99,102"/></clipPath></defs><rect x="0" y="0" width="171" height="103" fill="#a0a0a0"/><rect x="1" y="1" width="170" height="102" fill="#696969"/><rect x="170" y="1" width="1" height="102" fill="#e3e3e3"/><rect x="1" y="102" width="170" height="1" fill="#e3e3e3"/><rect x="171" y="0" width="1" height="104" fill="#fff"/><rect x="0" y="103" width="172" height="1" fill="#fff"/><rect x="2" y="2" width="168" height="100" fill="#000"/><g clip-path="url(#cg2)"><polygon points="1.99,102 1.99,100.99 4.98,99.74 8.47,95.38 11.83,104.35 14.94,104.35 17.43,99.12 19.3,100.36 23.66,94.14 26.77,96.0 29.27,96.0 29.89,86.04 30.88,66.12 31.76,46.19 32.63,35.61 35.49,33.74 36.74,20.66 38.61,5.09 39.6,20.66 40.1,53.04 41.1,84.17 41.72,100.36 44.21,94.14 44.83,89.15 46.33,70.47 47.95,23.15 49.19,0.74 51.68,0.74 52.3,8.21 53.3,26.89 54.55,46.19 55.42,70.47 56.66,95.38 58.53,100.99 59.78,96.63 61.02,71.72 62.89,64.87 65.38,58.02 67.25,48.06 68.49,36.85 69.49,48.06 70.36,67.98 71.61,97.25 72.23,81.68 73.47,70.47 74.72,44.95 75.97,6.34 76.59,0.74 85.31,0.74 86.18,11.94 86.92,50.55 88.67,70.47 89.04,89.78 89.91,99.12 92.15,92.89 94.89,92.89 95.64,84.17 96.89,64.25 98.38,33.74 99.38,46.19 100.25,67.98 101.12,89.78 102.12,100.36 103.99,99.12 107.1,104.35 113.95,104.35 117.06,100.36 118.93,100.36 119.55,85.42 120.8,53.04 121.42,21.28 122.67,3.85 123.91,20.04 125.16,30.0 126.4,43.08 127.65,58.02 128.89,80.44 130.14,70.47 131.76,67.36 136.99,69.23 140.1,69.23 141.97,71.72 143.84,79.19 146.7,97.25 147.95,82.93 149.44,68.61 151.93,68.61 153.42,74.21 154.42,86.66 155.42,97.87 156.29,85.42 158.16,67.36 159.4,74.21 160.02,82.93 161.27,97.25 161.89,82.93 162.52,51.17 163.39,20.04 164.63,3.85 166.25,20.04 167.5,46.81 168.37,48.06 169.12,70.47 169.99,70.47 169.99,102" fill="#006400"/><g fill="#008000" shape-rendering="crispEdges"><rect x="2" y="2" width="1" height="100"/><rect x="17" y="2" width="1" height="100"/><rect x="32" y="2" width="1" height="100"/><rect x="47" y="2" width="1" height="100"/><rect x="62" y="2" width="1" height="100"/><rect x="77" y="2" width="1" height="100"/><rect x="92" y="2" width="1" height="100"/><rect x="107" y="2" width="1" height="100"/><rect x="122" y="2" width="1" height="100"/><rect x="137" y="2" width="1" height="100"/><rect x="152" y="2" width="1" height="100"/><rect x="167" y="2" width="1" height="100"/><rect x="2" y="12" width="168" height="1"/><rect x="2" y="22" width="168" height="1"/><rect x="2" y="32" width="168" height="1"/><rect x="2" y="42" width="168" height="1"/><rect x="2" y="52" width="168" height="1"/><rect x="2" y="62" width="168" height="1"/><rect x="2" y="72" width="168" height="1"/><rect x="2" y="82" width="168" height="1"/><rect x="2" y="92" width="168" height="1"/></g><g clip-path="url(#fg2)"><g fill="#00e800" shape-rendering="crispEdges"><rect x="2" y="2" width="1" height="100"/><rect x="17" y="2" width="1" height="100"/><rect x="32" y="2" width="1" height="100"/><rect x="47" y="2" width="1" height="100"/><rect x="62" y="2" width="1" height="100"/><rect x="77" y="2" width="1" height="100"/><rect x="92" y="2" width="1" height="100"/><rect x="107" y="2" width="1" height="100"/><rect x="122" y="2" width="1" height="100"/><rect x="137" y="2" width="1" height="100"/><rect x="152" y="2" width="1" height="100"/><rect x="167" y="2" width="1" height="100"/><rect x="2" y="12" width="168" height="1"/><rect x="2" y="22" width="168" height="1"/><rect x="2" y="32" width="168" height="1"/><rect x="2" y="42" width="168" height="1"/><rect x="2" y="52" width="168" height="1"/><rect x="2" y="62" width="168" height="1"/><rect x="2" y="72" width="168" height="1"/><rect x="2" y="82" width="168" height="1"/><rect x="2" y="92" width="168" height="1"/></g></g><polyline points="1.99,100.99 4.98,99.74 8.47,95.38 11.83,104.35 14.94,104.35 17.43,99.12 19.3,100.36 23.66,94.14 26.77,96.0 29.27,96.0 29.89,86.04 30.88,66.12 31.76,46.19 32.63,35.61 35.49,33.74 36.74,20.66 38.61,5.09 39.6,20.66 40.1,53.04 41.1,84.17 41.72,100.36 44.21,94.14 44.83,89.15 46.33,70.47 47.95,23.15 49.19,0.74 51.68,0.74 52.3,8.21 53.3,26.89 54.55,46.19 55.42,70.47 56.66,95.38 58.53,100.99 59.78,96.63 61.02,71.72 62.89,64.87 65.38,58.02 67.25,48.06 68.49,36.85 69.49,48.06 70.36,67.98 71.61,97.25 72.23,81.68 73.47,70.47 74.72,44.95 75.97,6.34 76.59,0.74 85.31,0.74 86.18,11.94 86.92,50.55 88.67,70.47 89.04,89.78 89.91,99.12 92.15,92.89 94.89,92.89 95.64,84.17 96.89,64.25 98.38,33.74 99.38,46.19 100.25,67.98 101.12,89.78 102.12,100.36 103.99,99.12 107.1,104.35 113.95,104.35 117.06,100.36 118.93,100.36 119.55,85.42 120.8,53.04 121.42,21.28 122.67,3.85 123.91,20.04 125.16,30.0 126.4,43.08 127.65,58.02 128.89,80.44 130.14,70.47 131.76,67.36 136.99,69.23 140.1,69.23 141.97,71.72 143.84,79.19 146.7,97.25 147.95,82.93 149.44,68.61 151.93,68.61 153.42,74.21 154.42,86.66 155.42,97.87 156.29,85.42 158.16,67.36 159.4,74.21 160.02,82.93 161.27,97.25 161.89,82.93 162.52,51.17 163.39,20.04 164.63,3.85 166.25,20.04 167.5,46.81 168.37,48.06 169.12,70.47 169.99,70.47" fill="none" stroke="#00ff00" stroke-width="1.15" stroke-linejoin="miter"/></g></svg>
<div class="tx " style="left:1168px;top:530px;height:17px;line-height:17px;"><span style="transform:scaleX(1.0834);transform-origin:left center">Memory</span></div>
<div class="tx " style="right:46px;top:530px;height:17px;line-height:17px;text-align:right;"><span style="transform:scaleX(1.0103);transform-origin:right center">100 Hard Faults/sec</span></div>
<div class="tx " style="right:46px;top:651px;height:17px;line-height:17px;text-align:right;"><span style="transform:scaleX(0.9391);transform-origin:right center">0</span></div>
<div style="left:1339px;top:537px;width:6px;height:124px;border:1px solid #000;border-left:none"></div>
<svg style="position:absolute;left:1166px;top:547px" width="172" height="104" viewBox="0 0 172 104"><defs><clipPath id="cg3"><rect x="2" y="2" width="168" height="100"/></clipPath><clipPath id="fg3"><polygon points="1.99,102 1.99,104.35 92.78,104.35 95.27,94.14 99.0,104.35 124.53,104.35 124.53,101.36 126.77,101.36 126.77,104.35 169.99,104.35 169.99,102"/></clipPath></defs><rect x="0" y="0" width="171" height="103" fill="#a0a0a0"/><rect x="1" y="1" width="170" height="102" fill="#696969"/><rect x="170" y="1" width="1" height="102" fill="#e3e3e3"/><rect x="1" y="102" width="170" height="1" fill="#e3e3e3"/><rect x="171" y="0" width="1" height="104" fill="#fff"/><rect x="0" y="103" width="172" height="1" fill="#fff"/><rect x="2" y="2" width="168" height="100" fill="#000"/><g clip-path="url(#cg3)"><polygon points="1.99,102 1.99,104.35 92.78,104.35 95.27,94.14 99.0,104.35 124.53,104.35 124.53,101.36 126.77,101.36 126.77,104.35 169.99,104.35 169.99,102" fill="#006400"/><g fill="#008000" shape-rendering="crispEdges"><rect x="2" y="2" width="1" height="100"/><rect x="17" y="2" width="1" height="100"/><rect x="32" y="2" width="1" height="100"/><rect x="47" y="2" width="1" height="100"/><rect x="62" y="2" width="1" height="100"/><rect x="77" y="2" width="1" height="100"/><rect x="92" y="2" width="1" height="100"/><rect x="107" y="2" width="1" height="100"/><rect x="122" y="2" width="1" height="100"/><rect x="137" y="2" width="1" height="100"/><rect x="152" y="2" width="1" height="100"/><rect x="167" y="2" width="1" height="100"/><rect x="2" y="12" width="168" height="1"/><rect x="2" y="22" width="168" height="1"/><rect x="2" y="32" width="168" height="1"/><rect x="2" y="42" width="168" height="1"/><rect x="2" y="52" width="168" height="1"/><rect x="2" y="62" width="168" height="1"/><rect x="2" y="72" width="168" height="1"/><rect x="2" y="82" width="168" height="1"/><rect x="2" y="92" width="168" height="1"/></g><g clip-path="url(#fg3)"><g fill="#00e800" shape-rendering="crispEdges"><rect x="2" y="2" width="1" height="100"/><rect x="17" y="2" width="1" height="100"/><rect x="32" y="2" width="1" height="100"/><rect x="47" y="2" width="1" height="100"/><rect x="62" y="2" width="1" height="100"/><rect x="77" y="2" width="1" height="100"/><rect x="92" y="2" width="1" height="100"/><rect x="107" y="2" width="1" height="100"/><rect x="122" y="2" width="1" height="100"/><rect x="137" y="2" width="1" height="100"/><rect x="152" y="2" width="1" height="100"/><rect x="167" y="2" width="1" height="100"/><rect x="2" y="12" width="168" height="1"/><rect x="2" y="22" width="168" height="1"/><rect x="2" y="32" width="168" height="1"/><rect x="2" y="42" width="168" height="1"/><rect x="2" y="52" width="168" height="1"/><rect x="2" y="62" width="168" height="1"/><rect x="2" y="72" width="168" height="1"/><rect x="2" y="82" width="168" height="1"/><rect x="2" y="92" width="168" height="1"/></g></g><polyline points="1.99,104.35 92.78,104.35 95.27,94.14 99.0,104.35 124.53,104.35 124.53,101.36 126.77,101.36 126.77,104.35 169.99,104.35" fill="none" stroke="#00ff00" stroke-width="1.15" stroke-linejoin="miter"/><rect x="2" y="65" width="168" height="2" fill="#3c8cf0"/><rect x="2" y="67" width="168" height="0.5" fill="#400030"/></g></svg>
</div></div></div></body></html>
